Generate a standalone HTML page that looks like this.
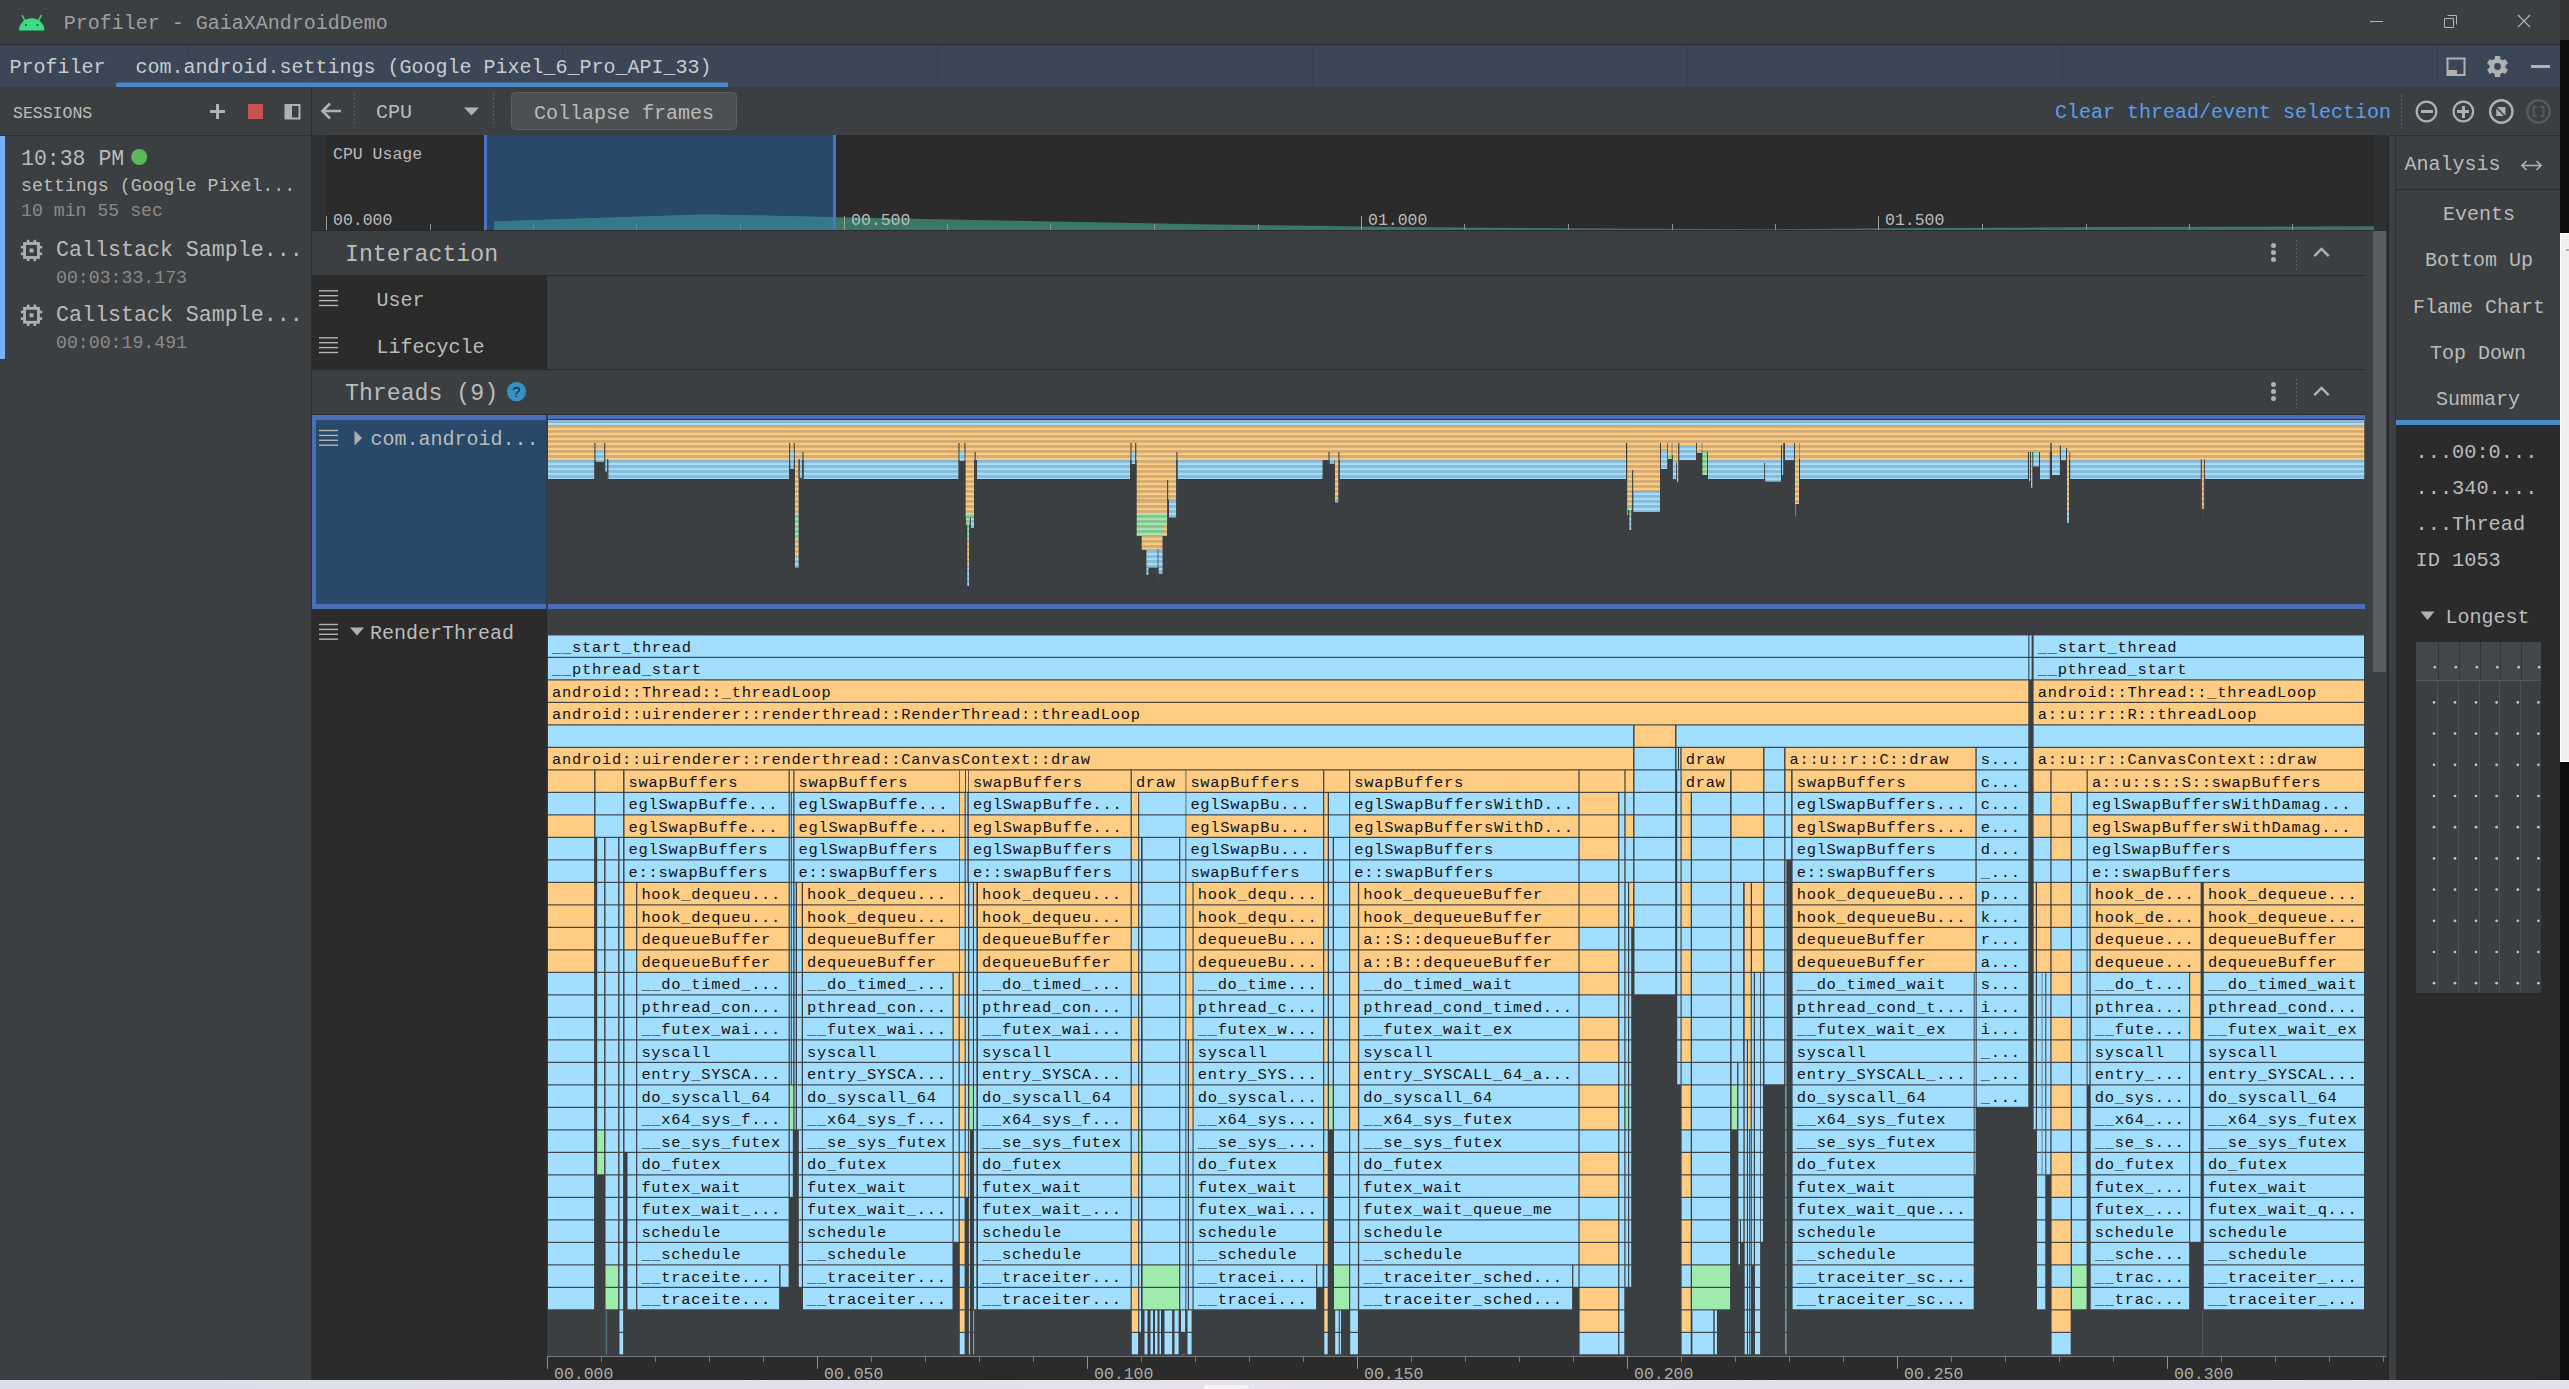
<!DOCTYPE html>
<html><head><meta charset="utf-8"><title>Profiler - GaiaXAndroidDemo</title>
<style>
html,body{margin:0;padding:0;background:#3c3f41;overflow:hidden}
svg{display:block}
text{font-family:"Liberation Mono",monospace;white-space:pre}
</style></head>
<body>
<svg width="2569" height="1389" viewBox="0 0 2569 1389">
<rect x="0" y="0" width="2560" height="1380" fill="#3c3f41" shape-rendering="crispEdges"/>
<rect x="2560" y="0" width="9" height="40" fill="#323232" shape-rendering="crispEdges"/>
<rect x="2560" y="40" width="9" height="193" fill="#0c0c0c" shape-rendering="crispEdges"/>
<rect x="2560" y="233" width="9" height="529" fill="#f0f0f0" shape-rendering="crispEdges"/>
<rect x="2560" y="233" width="1" height="529" fill="#ffffff" shape-rendering="crispEdges"/>
<rect x="2560" y="233" width="9" height="1" fill="#ffffff" shape-rendering="crispEdges"/>
<rect x="2560" y="761" width="9" height="1" fill="#ffffff" shape-rendering="crispEdges"/>
<rect x="2560" y="762" width="9" height="618" fill="#0c0c0c" shape-rendering="crispEdges"/>
<rect x="2566" y="249" width="3" height="2" fill="#a9b6c4" shape-rendering="crispEdges"/>
<defs><linearGradient id="bot" x1="0" x2="1" y1="0" y2="0"><stop offset="0" stop-color="#d9deea"/><stop offset="0.3" stop-color="#e2e0ea"/><stop offset="0.5" stop-color="#e7e2ec"/><stop offset="0.8" stop-color="#dfe0ea"/><stop offset="1" stop-color="#e2e2ec"/></linearGradient></defs>
<rect x="0" y="1380" width="2569" height="9" fill="url(#bot)"/>
<rect x="1203" y="1385" width="46" height="8" rx="4" fill="#f6f4f8"/>
<rect x="0" y="44" width="2560" height="1" fill="#2c2e2f" shape-rendering="crispEdges"/>
<g transform="translate(19,14.5)"><path d="M0 16 A12.7 12.2 0 0 1 25.4 16 Z" fill="#3ddc84"/><line x1="5.6" y1="5.6" x2="3.3" y2="1.2" stroke="#3ddc84" stroke-width="1.5" stroke-linecap="round"/><line x1="19.8" y1="5.6" x2="22.1" y2="1.2" stroke="#3ddc84" stroke-width="1.5" stroke-linecap="round"/><circle cx="7" cy="10.5" r="1.1" fill="#3c3f41"/><circle cx="18.4" cy="10.5" r="1.1" fill="#3c3f41"/></g>
<text x="63.8" y="29" font-size="20" fill="#9d9fa1">Profiler - GaiaXAndroidDemo</text>
<line x1="2370" y1="21.5" x2="2383" y2="21.5" stroke="#b4b4b4" stroke-width="1"/>
<path d="M2447.5 15.5h9v9 M2444.5 18.5h9v9h-9z" fill="none" stroke="#b4b4b4" stroke-width="1"/>
<path d="M2518 15 l12 12 M2530 15 l-12 12" fill="none" stroke="#b4b4b4" stroke-width="1.1"/>
<rect x="0" y="45" width="2560" height="42" fill="#3b4757" shape-rendering="crispEdges"/>
<rect x="187" y="45" width="1" height="41" fill="#364150" shape-rendering="crispEdges"/>
<rect x="562" y="45" width="1" height="41" fill="#364150" shape-rendering="crispEdges"/>
<rect x="937" y="45" width="1" height="41" fill="#364150" shape-rendering="crispEdges"/>
<rect x="1312" y="45" width="1" height="41" fill="#364150" shape-rendering="crispEdges"/>
<rect x="1687" y="45" width="1" height="41" fill="#364150" shape-rendering="crispEdges"/>
<rect x="2062" y="45" width="1" height="41" fill="#364150" shape-rendering="crispEdges"/>
<rect x="2437" y="45" width="1" height="41" fill="#364150" shape-rendering="crispEdges"/>
<text x="9.5" y="72.5" font-size="20" fill="#c8cbce">Profiler</text>
<text x="135.5" y="72.5" font-size="20" fill="#c8cbce">com.android.settings (Google Pixel_6_Pro_API_33)</text>
<path d="M118 82.5 H728 V87 H116 V84.5 A2 2 0 0 1 118 82.5Z" fill="#4a88c7"/>
<rect x="2447.5" y="58.5" width="17" height="16.5" fill="none" stroke="#afb1b3" stroke-width="2"/>
<rect x="2447" y="70" width="10" height="6" fill="#afb1b3" shape-rendering="crispEdges"/>
<path d="M2495.25 59.24 L2495.47 56.50 L2499.53 56.50 L2499.75 59.24 L2502.66 60.92 L2505.14 59.75 L2507.17 63.26 L2504.91 64.81 L2504.91 68.19 L2507.17 69.74 L2505.14 73.25 L2502.66 72.08 L2499.75 73.76 L2499.53 76.50 L2495.47 76.50 L2495.25 73.76 L2492.34 72.08 L2489.86 73.25 L2487.83 69.74 L2490.09 68.19 L2490.09 64.81 L2487.83 63.26 L2489.86 59.75 L2492.34 60.92Z" fill="#afb1b3" stroke="#afb1b3" stroke-width="1.2" stroke-linejoin="round"/>
<circle cx="2497.5" cy="66.5" r="3.4" fill="#3b4757"/>
<rect x="2531" y="65" width="19" height="3" fill="#afb1b3" shape-rendering="crispEdges"/>
<rect x="0" y="135" width="312" height="1" fill="#2c2e2f" shape-rendering="crispEdges"/>
<rect x="2389" y="135" width="171" height="1" fill="#2c2e2f" shape-rendering="crispEdges"/>
<text x="13" y="118" font-size="16.5" fill="#bbbbbb">SESSIONS</text>
<rect x="210" y="110.2" width="15" height="2.6" fill="#afb1b3" shape-rendering="crispEdges"/>
<rect x="216.2" y="104" width="2.6" height="15" fill="#afb1b3" shape-rendering="crispEdges"/>
<rect x="248" y="104" width="15" height="15" fill="#c75450" shape-rendering="crispEdges"/>
<rect x="285.5" y="105" width="14" height="13.5" fill="none" stroke="#afb1b3" stroke-width="2"/>
<rect x="285" y="104.5" width="7" height="14.5" fill="#afb1b3" shape-rendering="crispEdges"/>
<rect x="311" y="87" width="1" height="1293" fill="#2c2e2f" shape-rendering="crispEdges"/>
<path d="M341 111 H323 M330 103.5 L322.5 111 L330 118.5" fill="none" stroke="#afb1b3" stroke-width="2.6"/>
<line x1="354.5" y1="94" x2="354.5" y2="125" stroke="#6a6d6f" stroke-width="1" stroke-dasharray="1.5 2.5"/>
<line x1="493.5" y1="94" x2="493.5" y2="125" stroke="#6a6d6f" stroke-width="1" stroke-dasharray="1.5 2.5"/>
<line x1="2401.5" y1="95" x2="2401.5" y2="130" stroke="#6a6d6f" stroke-width="1" stroke-dasharray="1.5 2.5"/>
<text x="376" y="118" font-size="20" fill="#bbbbbb">CPU</text>
<path d="M464 107.5 h15 l-7.5 8 z" fill="#afb1b3"/>
<rect x="511.5" y="92.5" width="225" height="37" rx="4" fill="#4c5052" stroke="#5e6162" stroke-width="1"/>
<text x="534" y="118.5" font-size="20" fill="#bbbbbb">Collapse frames</text>
<text x="2055" y="117.5" font-size="20" fill="#589df6">Clear thread/event selection</text>
<circle cx="2426.5" cy="111.5" r="9.8" fill="none" stroke="#afb1b3" stroke-width="2.2"/>
<rect x="2420.5" y="110.2" width="12" height="2.6" fill="#afb1b3" shape-rendering="crispEdges"/>
<circle cx="2463.3" cy="111.5" r="9.8" fill="none" stroke="#afb1b3" stroke-width="2.2"/>
<rect x="2457.3" y="110.2" width="12" height="2.6" fill="#afb1b3" shape-rendering="crispEdges"/>
<rect x="2462" y="105.5" width="2.6" height="12" fill="#afb1b3" shape-rendering="crispEdges"/>
<circle cx="2501.3" cy="111.5" r="11.2" fill="none" stroke="#afb1b3" stroke-width="2.4"/>
<path d="M2497 107 h8.5 v8.5 z M2496.3 108.5 v7.5 h7.5 z" fill="#afb1b3"/>
<circle cx="2538.5" cy="111.5" r="11.2" fill="none" stroke="#585b5d" stroke-width="2.4"/>
<path d="M2536.5 106.8 h-3 v9.4 h3 M2540.5 106.8 h3 v9.4 h-3" fill="none" stroke="#585b5d" stroke-width="1.8"/>
<rect x="0" y="136" width="5" height="223" fill="#7aaeff" shape-rendering="crispEdges"/>
<text x="21" y="165" font-size="21.5" fill="#bbbbbb">10:38 PM</text>
<circle cx="139.2" cy="157" r="8" fill="#5cb85c"/>
<text x="21" y="190.5" font-size="18.3" fill="#bbbbbb">settings (Google Pixel...</text>
<text x="21" y="215.5" font-size="18.2" fill="#8a8a8a">10 min 55 sec</text>
<g transform="translate(31.5,250.5) scale(0.93)">
<rect x="-7.5" y="-7.5" width="15" height="15" fill="none" stroke="#afb1b3" stroke-width="3"/>
<rect x="-2.1" y="-2.1" width="4.2" height="4.2" fill="#afb1b3"/>
<rect x="-5.0" y="-11.5" width="2.8" height="3" fill="#afb1b3"/>
<rect x="-5.0" y="8.5" width="2.8" height="3" fill="#afb1b3"/>
<rect x="-11.5" y="-5.0" width="3" height="2.8" fill="#afb1b3"/>
<rect x="8.5" y="-5.0" width="3" height="2.8" fill="#afb1b3"/>
<rect x="2.2" y="-11.5" width="2.8" height="3" fill="#afb1b3"/>
<rect x="2.2" y="8.5" width="2.8" height="3" fill="#afb1b3"/>
<rect x="-11.5" y="2.2" width="3" height="2.8" fill="#afb1b3"/>
<rect x="8.5" y="2.2" width="3" height="2.8" fill="#afb1b3"/>
</g>
<text x="56" y="255.5" font-size="21.65" fill="#bbbbbb">Callstack Sample...</text>
<text x="56" y="282.5" font-size="18.2" fill="#8a8a8a">00:03:33.173</text>
<g transform="translate(31.5,315.3) scale(0.93)">
<rect x="-7.5" y="-7.5" width="15" height="15" fill="none" stroke="#afb1b3" stroke-width="3"/>
<rect x="-2.1" y="-2.1" width="4.2" height="4.2" fill="#afb1b3"/>
<rect x="-5.0" y="-11.5" width="2.8" height="3" fill="#afb1b3"/>
<rect x="-5.0" y="8.5" width="2.8" height="3" fill="#afb1b3"/>
<rect x="-11.5" y="-5.0" width="3" height="2.8" fill="#afb1b3"/>
<rect x="8.5" y="-5.0" width="3" height="2.8" fill="#afb1b3"/>
<rect x="2.2" y="-11.5" width="2.8" height="3" fill="#afb1b3"/>
<rect x="2.2" y="8.5" width="2.8" height="3" fill="#afb1b3"/>
<rect x="-11.5" y="2.2" width="3" height="2.8" fill="#afb1b3"/>
<rect x="8.5" y="2.2" width="3" height="2.8" fill="#afb1b3"/>
</g>
<text x="56" y="320.5" font-size="21.65" fill="#bbbbbb">Callstack Sample...</text>
<text x="56" y="347.5" font-size="18.2" fill="#8a8a8a">00:00:19.491</text>
<rect x="312" y="135" width="2062" height="96" fill="#2b2b2b" shape-rendering="crispEdges"/>
<rect x="312" y="135" width="14" height="96" fill="#2e3031" shape-rendering="crispEdges"/>
<rect x="2374" y="135" width="13" height="96" fill="#2e2f31" shape-rendering="crispEdges"/>
<rect x="2387" y="136" width="2" height="1244" fill="#272829" shape-rendering="crispEdges"/>
<rect x="2389" y="136" width="6" height="1244" fill="#3d4043" shape-rendering="crispEdges"/>
<rect x="2395" y="136" width="1" height="284" fill="#303233" shape-rendering="crispEdges"/>
<rect x="484" y="135" width="352" height="96" fill="#28496a" shape-rendering="crispEdges"/>
<clipPath id="cs"><rect x="484" y="135" width="352" height="96"/></clipPath>
<path d="M494 230 L494 221.5 L703 214.5 L760 215.5 L836 217.3 L1000 220.5 L1200 224.2 L1400 227 L1600 228.6 L1760 229.3 L1900 228.2 L2100 227 L2374 226.2 L2374 230Z" fill="#3a7767"/>
<path d="M494 230 L494 221.5 L703 214.5 L760 215.5 L836 217.3 L1000 220.5 L1200 224.2 L1400 227 L1600 228.6 L1760 229.3 L1900 228.2 L2100 227 L2374 226.2 L2374 230Z" fill="#347989" clip-path="url(#cs)"/>
<rect x="484" y="135" width="3" height="96" fill="#4f73c4" shape-rendering="crispEdges"/>
<rect x="833" y="135" width="3" height="96" fill="#4f73c4" shape-rendering="crispEdges"/>
<text x="333" y="159" font-size="16.5" fill="#bbbbbb">CPU Usage</text>
<rect x="326" y="216" width="1" height="14" fill="#9a9c9d" shape-rendering="crispEdges"/>
<text x="333" y="224.5" font-size="16.5" fill="#bbbbbb">00.000</text>
<rect x="430" y="224" width="1" height="6" fill="#8f9192" shape-rendering="crispEdges"/>
<rect x="533" y="224" width="1" height="6" fill="#5d8aa0" shape-rendering="crispEdges"/>
<rect x="636" y="224" width="1" height="6" fill="#5d8aa0" shape-rendering="crispEdges"/>
<rect x="740" y="224" width="1" height="6" fill="#5d8aa0" shape-rendering="crispEdges"/>
<rect x="844" y="216" width="1" height="14" fill="#9a9c9d" shape-rendering="crispEdges"/>
<text x="851" y="224.5" font-size="16.5" fill="#bbbbbb">00.500</text>
<rect x="947" y="224" width="1" height="6" fill="#8f9192" shape-rendering="crispEdges"/>
<rect x="1050" y="224" width="1" height="6" fill="#8f9192" shape-rendering="crispEdges"/>
<rect x="1154" y="224" width="1" height="6" fill="#8f9192" shape-rendering="crispEdges"/>
<rect x="1258" y="224" width="1" height="6" fill="#8f9192" shape-rendering="crispEdges"/>
<rect x="1361" y="216" width="1" height="14" fill="#9a9c9d" shape-rendering="crispEdges"/>
<text x="1368" y="224.5" font-size="16.5" fill="#bbbbbb">01.000</text>
<rect x="1464" y="224" width="1" height="6" fill="#8f9192" shape-rendering="crispEdges"/>
<rect x="1568" y="224" width="1" height="6" fill="#8f9192" shape-rendering="crispEdges"/>
<rect x="1672" y="224" width="1" height="6" fill="#8f9192" shape-rendering="crispEdges"/>
<rect x="1775" y="224" width="1" height="6" fill="#8f9192" shape-rendering="crispEdges"/>
<rect x="1878" y="216" width="1" height="14" fill="#9a9c9d" shape-rendering="crispEdges"/>
<text x="1885" y="224.5" font-size="16.5" fill="#bbbbbb">01.500</text>
<rect x="1982" y="224" width="1" height="6" fill="#8f9192" shape-rendering="crispEdges"/>
<rect x="2086" y="224" width="1" height="6" fill="#8f9192" shape-rendering="crispEdges"/>
<rect x="2189" y="224" width="1" height="6" fill="#8f9192" shape-rendering="crispEdges"/>
<rect x="2292" y="224" width="1" height="6" fill="#8f9192" shape-rendering="crispEdges"/>
<rect x="312" y="230" width="2053" height="1" fill="#27292a" shape-rendering="crispEdges"/>
<rect x="312" y="275" width="2053" height="1" fill="#2a2c2d" shape-rendering="crispEdges"/>
<text x="345" y="261" font-size="23.2" fill="#bbbbbb">Interaction</text>
<circle cx="2273.5" cy="245.5" r="2.5" fill="#afb1b3"/>
<circle cx="2273.5" cy="252.5" r="2.5" fill="#afb1b3"/>
<circle cx="2273.5" cy="259.5" r="2.5" fill="#afb1b3"/>
<path d="M2314.3 256.2 L2321.5 249 L2328.7 256.2" fill="none" stroke="#afb1b3" stroke-width="2.4"/>
<line x1="2296.5" y1="240" x2="2296.5" y2="272" stroke="#6a6d6f" stroke-width="1" stroke-dasharray="1.5 2.5"/>
<rect x="312" y="276" width="234.5" height="93.5" fill="#2b2b2b" shape-rendering="crispEdges"/>
<rect x="319" y="290.1" width="19" height="1.4" fill="#b4b4b4"/>
<rect x="319" y="295" width="19" height="1.4" fill="#b4b4b4"/>
<rect x="319" y="299.9" width="19" height="1.4" fill="#b4b4b4"/>
<rect x="319" y="304.8" width="19" height="1.4" fill="#b4b4b4"/>
<text x="376.5" y="306" font-size="20" fill="#bbbbbb">User</text>
<rect x="319" y="337.1" width="19" height="1.4" fill="#b4b4b4"/>
<rect x="319" y="342" width="19" height="1.4" fill="#b4b4b4"/>
<rect x="319" y="346.9" width="19" height="1.4" fill="#b4b4b4"/>
<rect x="319" y="351.8" width="19" height="1.4" fill="#b4b4b4"/>
<text x="376.5" y="353" font-size="20" fill="#bbbbbb">Lifecycle</text>
<rect x="312" y="369" width="2053" height="1" fill="#2a2c2d" shape-rendering="crispEdges"/>
<text x="345" y="399.7" font-size="23.2" fill="#bbbbbb">Threads (9)</text>
<circle cx="516.5" cy="391.6" r="9.6" fill="#3592c4"/>
<text x="516.5" y="397.2" font-size="15" fill="#1f2a30" text-anchor="middle" style="font-family:'Liberation Sans',sans-serif">?</text>
<circle cx="2273.5" cy="384.5" r="2.5" fill="#afb1b3"/>
<circle cx="2273.5" cy="391.5" r="2.5" fill="#afb1b3"/>
<circle cx="2273.5" cy="398.5" r="2.5" fill="#afb1b3"/>
<path d="M2314.3 395.2 L2321.5 388 L2328.7 395.2" fill="none" stroke="#afb1b3" stroke-width="2.4"/>
<line x1="2296.5" y1="379" x2="2296.5" y2="411" stroke="#6a6d6f" stroke-width="1" stroke-dasharray="1.5 2.5"/>
<rect x="312" y="414" width="2053" height="1" fill="#2a2c2d" shape-rendering="crispEdges"/>
<rect x="312" y="415" width="2053" height="193.5" fill="#4b6eb7" shape-rendering="crispEdges"/>
<rect x="316" y="419.5" width="230" height="184.5" fill="#28496a" shape-rendering="crispEdges"/>
<rect x="546" y="415" width="1.5" height="193.5" fill="#2f3d52" shape-rendering="crispEdges"/>
<rect x="547.5" y="419.5" width="1817.5" height="184.5" fill="#3c3f41" shape-rendering="crispEdges"/>
<rect x="319" y="429.8" width="19" height="1.4" fill="#b4b4b4"/>
<rect x="319" y="434.7" width="19" height="1.4" fill="#b4b4b4"/>
<rect x="319" y="439.6" width="19" height="1.4" fill="#b4b4b4"/>
<rect x="319" y="444.5" width="19" height="1.4" fill="#b4b4b4"/>
<path d="M354.5 430.5 v15 l7.5 -7.5z" fill="#afb1b3"/>
<text x="370.5" y="445" font-size="20" fill="#bbbbbb">com.android...</text>
<rect x="312" y="608.5" width="234.5" height="771.5" fill="#2b2b2b" shape-rendering="crispEdges"/>
<rect x="319" y="623.8" width="19" height="1.4" fill="#b4b4b4"/>
<rect x="319" y="628.7" width="19" height="1.4" fill="#b4b4b4"/>
<rect x="319" y="633.6" width="19" height="1.4" fill="#b4b4b4"/>
<rect x="319" y="638.5" width="19" height="1.4" fill="#b4b4b4"/>
<path d="M350 627.5 h14 l-7 8z" fill="#afb1b3"/>
<text x="370" y="638.5" font-size="20" fill="#bbbbbb">RenderThread</text>
<rect x="2373" y="231" width="13" height="441" fill="#5b5d5f" shape-rendering="crispEdges"/>
<rect x="546.5" y="1356.5" width="1840.5" height="23.5" fill="#2b2b2b" shape-rendering="crispEdges"/>
<rect x="547" y="1356" width="1839" height="1" fill="#77797a" shape-rendering="crispEdges"/>
<rect x="547" y="1356" width="1" height="13" fill="#8d8f90" shape-rendering="crispEdges"/>
<text x="554" y="1378.5" font-size="16.5" fill="#a9abad">00.000</text>
<rect x="601" y="1356" width="1" height="6" fill="#77797a" shape-rendering="crispEdges"/>
<rect x="655" y="1356" width="1" height="6" fill="#77797a" shape-rendering="crispEdges"/>
<rect x="709" y="1356" width="1" height="6" fill="#77797a" shape-rendering="crispEdges"/>
<rect x="763" y="1356" width="1" height="6" fill="#77797a" shape-rendering="crispEdges"/>
<rect x="817" y="1356" width="1" height="13" fill="#8d8f90" shape-rendering="crispEdges"/>
<text x="824" y="1378.5" font-size="16.5" fill="#a9abad">00.050</text>
<rect x="871" y="1356" width="1" height="6" fill="#77797a" shape-rendering="crispEdges"/>
<rect x="925" y="1356" width="1" height="6" fill="#77797a" shape-rendering="crispEdges"/>
<rect x="979" y="1356" width="1" height="6" fill="#77797a" shape-rendering="crispEdges"/>
<rect x="1033" y="1356" width="1" height="6" fill="#77797a" shape-rendering="crispEdges"/>
<rect x="1087" y="1356" width="1" height="13" fill="#8d8f90" shape-rendering="crispEdges"/>
<text x="1094" y="1378.5" font-size="16.5" fill="#a9abad">00.100</text>
<rect x="1141" y="1356" width="1" height="6" fill="#77797a" shape-rendering="crispEdges"/>
<rect x="1195" y="1356" width="1" height="6" fill="#77797a" shape-rendering="crispEdges"/>
<rect x="1249" y="1356" width="1" height="6" fill="#77797a" shape-rendering="crispEdges"/>
<rect x="1303" y="1356" width="1" height="6" fill="#77797a" shape-rendering="crispEdges"/>
<rect x="1357" y="1356" width="1" height="13" fill="#8d8f90" shape-rendering="crispEdges"/>
<text x="1364" y="1378.5" font-size="16.5" fill="#a9abad">00.150</text>
<rect x="1411" y="1356" width="1" height="6" fill="#77797a" shape-rendering="crispEdges"/>
<rect x="1465" y="1356" width="1" height="6" fill="#77797a" shape-rendering="crispEdges"/>
<rect x="1519" y="1356" width="1" height="6" fill="#77797a" shape-rendering="crispEdges"/>
<rect x="1573" y="1356" width="1" height="6" fill="#77797a" shape-rendering="crispEdges"/>
<rect x="1627" y="1356" width="1" height="13" fill="#8d8f90" shape-rendering="crispEdges"/>
<text x="1634" y="1378.5" font-size="16.5" fill="#a9abad">00.200</text>
<rect x="1681" y="1356" width="1" height="6" fill="#77797a" shape-rendering="crispEdges"/>
<rect x="1735" y="1356" width="1" height="6" fill="#77797a" shape-rendering="crispEdges"/>
<rect x="1789" y="1356" width="1" height="6" fill="#77797a" shape-rendering="crispEdges"/>
<rect x="1843" y="1356" width="1" height="6" fill="#77797a" shape-rendering="crispEdges"/>
<rect x="1897" y="1356" width="1" height="13" fill="#8d8f90" shape-rendering="crispEdges"/>
<text x="1904" y="1378.5" font-size="16.5" fill="#a9abad">00.250</text>
<rect x="1951" y="1356" width="1" height="6" fill="#77797a" shape-rendering="crispEdges"/>
<rect x="2005" y="1356" width="1" height="6" fill="#77797a" shape-rendering="crispEdges"/>
<rect x="2059" y="1356" width="1" height="6" fill="#77797a" shape-rendering="crispEdges"/>
<rect x="2113" y="1356" width="1" height="6" fill="#77797a" shape-rendering="crispEdges"/>
<rect x="2167" y="1356" width="1" height="13" fill="#8d8f90" shape-rendering="crispEdges"/>
<text x="2174" y="1378.5" font-size="16.5" fill="#a9abad">00.300</text>
<rect x="2221" y="1356" width="1" height="6" fill="#77797a" shape-rendering="crispEdges"/>
<rect x="2275" y="1356" width="1" height="6" fill="#77797a" shape-rendering="crispEdges"/>
<rect x="2329" y="1356" width="1" height="6" fill="#77797a" shape-rendering="crispEdges"/>
<rect x="2383" y="1356" width="1" height="6" fill="#77797a" shape-rendering="crispEdges"/>
<defs><pattern id="pO" patternUnits="userSpaceOnUse" x="0" y="425.1" width="8" height="5"><rect width="8" height="5" fill="#fecc82"/><rect y="0" width="8" height="2.75" fill="#cfaa72"/></pattern><pattern id="pB" patternUnits="userSpaceOnUse" x="0" y="425.1" width="8" height="5"><rect width="8" height="5" fill="#a2deff"/><rect y="0" width="8" height="2.75" fill="#8ab7d1"/></pattern><pattern id="pG" patternUnits="userSpaceOnUse" x="0" y="425.1" width="8" height="5"><rect width="8" height="5" fill="#9feaad"/><rect y="0" width="8" height="2.75" fill="#86c08f"/></pattern></defs>
<rect x="547.5" y="419.1" width="1816.8" height="0.9" fill="#30333c"/>
<rect x="548" y="420" width="1816.3" height="2.9" fill="#8cbad4"/>
<rect x="548" y="422.9" width="1816.3" height="1.2" fill="#fecc82"/>
<rect x="548" y="424" width="1816.3" height="1.1" fill="#a2deff"/>
<rect x="548" y="425.1" width="1816.3" height="35" fill="url(#pO)"/>
<rect x="548" y="460.1" width="1816.3" height="19" fill="url(#pB)"/>
<rect x="548" y="479.1" width="1816.3" height="0.9" fill="#34373a"/>
<rect x="594.2" y="460.1" width="14.1" height="20.1" fill="#3c3f41"/>
<rect x="595.6" y="450.1" width="8.6" height="11.8" fill="url(#pB)"/>
<rect x="594.3" y="443" width="1.2" height="19" fill="#474b4e"/>
<rect x="604.1" y="443" width="1.2" height="29" fill="#474b4e"/>
<rect x="605.4" y="460.1" width="1.6" height="11.7" fill="url(#pB)"/>
<rect x="607" y="459" width="1.2" height="21" fill="#474b4e"/>
<rect x="789" y="460" width="14.6" height="20.2" fill="#3c3f41"/>
<rect x="789" y="443" width="1.2" height="26" fill="#474b4e"/>
<rect x="793.7" y="443" width="1.2" height="26" fill="#474b4e"/>
<rect x="790.4" y="451" width="3.3" height="18" fill="url(#pB)"/>
<rect x="795" y="457.6" width="3.6" height="56.4" fill="url(#pO)"/>
<rect x="795" y="514" width="3.6" height="25" fill="url(#pG)"/>
<rect x="795" y="539" width="3.6" height="18" fill="url(#pO)"/>
<rect x="795" y="557" width="3.6" height="10.6" fill="url(#pB)"/>
<rect x="798.6" y="459" width="1.2" height="19" fill="#474b4e"/>
<rect x="799.9" y="457.6" width="2" height="20.4" fill="url(#pB)"/>
<rect x="802.4" y="452" width="1.2" height="26" fill="#474b4e"/>
<rect x="958.4" y="460" width="18.6" height="20.2" fill="#3c3f41"/>
<rect x="958.4" y="443" width="1.2" height="18" fill="#474b4e"/>
<rect x="964.3" y="443" width="1.2" height="18" fill="#474b4e"/>
<rect x="959.8" y="451" width="4.5" height="10" fill="url(#pB)"/>
<rect x="965.6" y="457.6" width="8.4" height="56.4" fill="url(#pO)"/>
<rect x="965.6" y="514" width="8.4" height="3.5" fill="url(#pG)"/>
<rect x="966" y="517.5" width="3.8" height="7.1" fill="url(#pG)"/>
<rect x="970.9" y="517.5" width="3.1" height="10.5" fill="url(#pB)"/>
<rect x="967.3" y="524.6" width="1.7" height="14.4" fill="url(#pG)"/>
<rect x="967.3" y="539" width="1.7" height="27" fill="url(#pO)"/>
<rect x="967.3" y="566" width="1.7" height="20" fill="url(#pB)"/>
<rect x="974.6" y="452" width="1.2" height="26" fill="#474b4e"/>
<rect x="1130" y="460" width="47.5" height="20.2" fill="#3c3f41"/>
<rect x="1130.4" y="443" width="1.2" height="21" fill="#474b4e"/>
<rect x="1135.1" y="443" width="1.2" height="21" fill="#474b4e"/>
<rect x="1131.8" y="451" width="3.2" height="13" fill="url(#pB)"/>
<rect x="1136.7" y="457.6" width="39.3" height="41.9" fill="url(#pO)"/>
<rect x="1169" y="499.5" width="7" height="18" fill="url(#pB)"/>
<rect x="1136.7" y="499.5" width="30.3" height="14.5" fill="url(#pO)"/>
<rect x="1136.7" y="514" width="30.3" height="22" fill="url(#pG)"/>
<rect x="1164" y="524.6" width="3" height="11.4" fill="url(#pO)"/>
<rect x="1167" y="480" width="1.2" height="44.6" fill="#474b4e"/>
<rect x="1141.7" y="536" width="20.8" height="13.7" fill="url(#pO)"/>
<rect x="1146.4" y="549.7" width="16.1" height="17.9" fill="url(#pB)"/>
<rect x="1158.6" y="567.6" width="3.9" height="6.1" fill="url(#pB)"/>
<rect x="1146.4" y="567.6" width="2" height="7.2" fill="url(#pB)"/>
<rect x="1157.6" y="549" width="0.8" height="34.7" fill="#474b4e"/>
<rect x="1176.3" y="452" width="1.2" height="65.5" fill="#474b4e"/>
<rect x="1136.7" y="457.2" width="39.3" height="1" fill="#a2deff"/>
<rect x="1322.6" y="460" width="17.2" height="20.2" fill="#3c3f41"/>
<rect x="1322.6" y="476.5" width="2" height="3" fill="#3c3f41"/>
<rect x="1328.4" y="452" width="1.2" height="12" fill="#474b4e"/>
<rect x="1338.2" y="452" width="1.2" height="51" fill="#474b4e"/>
<rect x="1329.8" y="457.6" width="4.6" height="6.1" fill="url(#pB)"/>
<rect x="1335" y="457.6" width="3.2" height="41.9" fill="url(#pO)"/>
<rect x="1335" y="499.5" width="3.2" height="3" fill="url(#pB)"/>
<rect x="1626" y="443" width="82" height="37.2" fill="#3c3f41"/>
<rect x="1627.2" y="443" width="32.8" height="48.1" fill="url(#pO)"/>
<rect x="1633.3" y="491.1" width="26.7" height="20.9" fill="url(#pB)"/>
<rect x="1627.2" y="491.1" width="4.7" height="13.9" fill="url(#pO)"/>
<rect x="1627.2" y="505" width="4.7" height="5" fill="url(#pG)"/>
<rect x="1627.2" y="510" width="0.8" height="5" fill="url(#pO)"/>
<rect x="1629.4" y="510" width="1.8" height="7" fill="url(#pG)"/>
<rect x="1629.4" y="517" width="1.8" height="13" fill="url(#pB)"/>
<rect x="1632" y="470" width="1.2" height="38" fill="#474b4e"/>
<rect x="1627.2" y="448.9" width="32.8" height="1" fill="#a2deff"/>
<rect x="1661" y="443" width="6.2" height="6.3" fill="url(#pO)"/>
<rect x="1661" y="449.3" width="6.2" height="19.7" fill="url(#pB)"/>
<rect x="1667.9" y="443" width="3.9" height="13" fill="url(#pO)"/>
<rect x="1667.9" y="456" width="3.9" height="3" fill="url(#pG)"/>
<rect x="1672.2" y="443" width="0.7" height="12" fill="url(#pO)"/>
<rect x="1672.9" y="443" width="3.1" height="17.1" fill="url(#pO)"/>
<rect x="1672.9" y="460.1" width="3.1" height="19" fill="url(#pB)"/>
<rect x="1676" y="443" width="0.9" height="20" fill="url(#pO)"/>
<rect x="1676.9" y="443" width="1.3" height="17.1" fill="url(#pO)"/>
<rect x="1676.9" y="460.1" width="1.3" height="21.9" fill="url(#pB)"/>
<rect x="1679.4" y="443" width="16.6" height="3" fill="url(#pO)"/>
<rect x="1679.4" y="446" width="16.6" height="14.1" fill="url(#pB)"/>
<rect x="1696.9" y="443" width="4.8" height="10" fill="url(#pO)"/>
<rect x="1701.7" y="443" width="0.7" height="9" fill="url(#pO)"/>
<rect x="1702.4" y="443" width="4.7" height="8.5" fill="url(#pO)"/>
<rect x="1702.4" y="451.5" width="4.7" height="23.5" fill="url(#pG)"/>
<rect x="1707.1" y="443" width="0.9" height="9" fill="url(#pO)"/>
<rect x="1764.1" y="463" width="1.2" height="18.7" fill="#474b4e"/>
<rect x="1765.4" y="460.1" width="15.5" height="21.6" fill="url(#pB)"/>
<rect x="1781" y="443" width="19" height="37.2" fill="#3c3f41"/>
<rect x="1781" y="443" width="2.2" height="2.3" fill="url(#pO)"/>
<rect x="1782" y="445.3" width="1.2" height="9.7" fill="url(#pO)"/>
<rect x="1782" y="455" width="1.2" height="20" fill="url(#pB)"/>
<rect x="1785" y="443" width="9" height="3" fill="url(#pO)"/>
<rect x="1785" y="446" width="9" height="14.1" fill="url(#pB)"/>
<rect x="1795" y="443" width="4" height="61" fill="url(#pO)"/>
<rect x="1795" y="475.2" width="4" height="0.9" fill="#9feaad"/>
<rect x="1795" y="480.2" width="4" height="0.9" fill="#9feaad"/>
<rect x="1795.2" y="504" width="0.9" height="12.5" fill="#6d8ea3"/>
<rect x="1799.4" y="443" width="0.6" height="16" fill="url(#pO)"/>
<rect x="2027.9" y="452" width="42.3" height="28.2" fill="#3c3f41"/>
<rect x="2029" y="452" width="1" height="17.5" fill="url(#pO)"/>
<rect x="2029" y="469.5" width="1" height="12" fill="url(#pB)"/>
<rect x="2031" y="452" width="1.3" height="20" fill="url(#pG)"/>
<rect x="2031" y="472" width="1.3" height="3" fill="url(#pO)"/>
<rect x="2031" y="475" width="1.3" height="13" fill="url(#pB)"/>
<rect x="2033.3" y="451.5" width="5.7" height="3.5" fill="url(#pG)"/>
<rect x="2033.3" y="455" width="5.7" height="11.5" fill="url(#pB)"/>
<rect x="2040" y="452" width="9.8" height="8.1" fill="url(#pO)"/>
<rect x="2040" y="460.1" width="9.8" height="19" fill="url(#pB)"/>
<rect x="2050.25" y="443" width="1.5" height="9" fill="#474b4e"/>
<rect x="2052" y="452" width="7.9" height="3" fill="url(#pO)"/>
<rect x="2052" y="455" width="7.9" height="20" fill="url(#pB)"/>
<rect x="2059.8" y="445.5" width="1.2" height="6.5" fill="#474b4e"/>
<rect x="2061" y="448.7" width="5" height="11.4" fill="url(#pB)"/>
<rect x="2066" y="448" width="1.2" height="4" fill="#474b4e"/>
<rect x="2067" y="452" width="2" height="58" fill="url(#pO)"/>
<rect x="2067" y="510" width="2" height="13" fill="url(#pB)"/>
<rect x="2069.6" y="452" width="0.6" height="7.5" fill="url(#pO)"/>
<rect x="2067" y="475.2" width="2" height="0.9" fill="#9feaad"/>
<rect x="2067" y="480.2" width="2" height="0.9" fill="#9feaad"/>
<rect x="2067" y="503" width="2" height="0.9" fill="#9feaad"/>
<rect x="2067" y="507" width="2" height="0.9" fill="#9feaad"/>
<rect x="2200.7" y="459.4" width="1.2" height="49.6" fill="#474b4e"/>
<rect x="2203.8" y="459.4" width="1.2" height="49.6" fill="#474b4e"/>
<rect x="2202" y="460" width="1.8" height="48.8" fill="url(#pO)"/>
<rect x="2202.5" y="508.8" width="0.8" height="12.8" fill="#474b4e"/>
<rect x="548" y="635.45" width="1480.3" height="21.35" fill="#a2deff"/>
<text x="552.1" y="651.55" font-size="15.4" fill="#121212" letter-spacing="0.74">__start_thread</text>
<rect x="548" y="657.95" width="1480.3" height="21.35" fill="#a2deff"/>
<text x="552.1" y="674.05" font-size="15.4" fill="#121212" letter-spacing="0.74">__pthread_start</text>
<rect x="548" y="680.45" width="1480.3" height="21.35" fill="#fecc82"/>
<text x="552.1" y="696.55" font-size="15.4" fill="#121212" letter-spacing="0.74">android::Thread::_threadLoop</text>
<rect x="548" y="702.95" width="1480.3" height="21.35" fill="#fecc82"/>
<text x="552.1" y="719.05" font-size="15.4" fill="#121212" letter-spacing="0.74">android::uirenderer::renderthread::RenderThread::threadLoop</text>
<rect x="548" y="725.45" width="1085.1" height="21.35" fill="#a2deff"/>
<rect x="1634.5" y="725.45" width="40.6" height="21.35" fill="#fecc82"/>
<rect x="1676.5" y="725.45" width="351.8" height="21.35" fill="#a2deff"/>
<rect x="548" y="747.95" width="1085.1" height="21.35" fill="#fecc82"/>
<text x="552.1" y="764.05" font-size="15.4" fill="#121212" letter-spacing="0.74">android::uirenderer::renderthread::CanvasContext::draw</text>
<rect x="1634.5" y="747.95" width="40.6" height="21.35" fill="#a2deff"/>
<rect x="1676.5" y="747.95" width="1.5" height="21.35" fill="#a2deff"/>
<rect x="1679" y="747.95" width="1.3" height="21.35" fill="#a2deff"/>
<rect x="1681.6" y="747.95" width="81.5" height="21.35" fill="#fecc82"/>
<text x="1685.7" y="764.05" font-size="15.4" fill="#121212" letter-spacing="0.74">draw</text>
<rect x="1764.5" y="747.95" width="19.6" height="21.35" fill="#a2deff"/>
<rect x="1785.5" y="747.95" width="189.9" height="21.35" fill="#fecc82"/>
<text x="1789.6" y="764.05" font-size="15.4" fill="#121212" letter-spacing="0.74">a::u::r::C::draw</text>
<rect x="1976.7" y="747.95" width="51.6" height="21.35" fill="#a2deff"/>
<text x="1980.8" y="764.05" font-size="15.4" fill="#121212" letter-spacing="0.74">s...</text>
<rect x="548" y="770.45" width="46.1" height="21.35" fill="#fecc82"/>
<rect x="548" y="792.95" width="46.1" height="21.35" fill="#a2deff"/>
<rect x="548" y="815.45" width="46.1" height="21.35" fill="#fecc82"/>
<rect x="548" y="837.95" width="46.1" height="21.35" fill="#a2deff"/>
<rect x="548" y="860.45" width="46.1" height="21.35" fill="#a2deff"/>
<rect x="548" y="882.95" width="46.1" height="21.35" fill="#fecc82"/>
<rect x="548" y="905.45" width="46.1" height="21.35" fill="#fecc82"/>
<rect x="548" y="927.95" width="46.1" height="21.35" fill="#fecc82"/>
<rect x="548" y="950.45" width="46.1" height="21.35" fill="#fecc82"/>
<rect x="548" y="972.95" width="46.1" height="21.35" fill="#a2deff"/>
<rect x="548" y="995.45" width="46.1" height="21.35" fill="#a2deff"/>
<rect x="548" y="1017.95" width="46.1" height="21.35" fill="#a2deff"/>
<rect x="548" y="1040.45" width="46.1" height="21.35" fill="#a2deff"/>
<rect x="548" y="1062.95" width="46.1" height="21.35" fill="#a2deff"/>
<rect x="548" y="1085.45" width="46.1" height="21.35" fill="#a2deff"/>
<rect x="548" y="1107.95" width="46.1" height="21.35" fill="#a2deff"/>
<rect x="548" y="1130.45" width="46.1" height="21.35" fill="#a2deff"/>
<rect x="548" y="1152.95" width="46.1" height="21.35" fill="#a2deff"/>
<rect x="548" y="1175.45" width="46.1" height="21.35" fill="#a2deff"/>
<rect x="548" y="1197.95" width="46.1" height="21.35" fill="#a2deff"/>
<rect x="548" y="1220.45" width="46.1" height="21.35" fill="#a2deff"/>
<rect x="548" y="1242.95" width="46.1" height="21.35" fill="#a2deff"/>
<rect x="548" y="1265.45" width="46.1" height="21.35" fill="#a2deff"/>
<rect x="548" y="1287.95" width="46.1" height="21.35" fill="#a2deff"/>
<rect x="595.5" y="770.45" width="27.6" height="21.35" fill="#fecc82"/>
<rect x="595.5" y="792.95" width="27.6" height="21.35" fill="#a2deff"/>
<rect x="595.5" y="815.45" width="27.6" height="21.35" fill="#a2deff"/>
<rect x="597.2" y="837.95" width="6.9" height="21.35" fill="#a2deff"/>
<rect x="597.2" y="860.45" width="6.9" height="21.35" fill="#a2deff"/>
<rect x="597.2" y="882.95" width="6.9" height="21.35" fill="#a2deff"/>
<rect x="597.2" y="905.45" width="6.9" height="21.35" fill="#a2deff"/>
<rect x="597.2" y="927.95" width="6.9" height="21.35" fill="#a2deff"/>
<rect x="597.2" y="950.45" width="6.9" height="21.35" fill="#a2deff"/>
<rect x="597.2" y="972.95" width="6.9" height="21.35" fill="#a2deff"/>
<rect x="597.2" y="995.45" width="6.9" height="21.35" fill="#a2deff"/>
<rect x="597.2" y="1017.95" width="6.9" height="21.35" fill="#a2deff"/>
<rect x="597.2" y="1040.45" width="6.9" height="21.35" fill="#a2deff"/>
<rect x="597.2" y="1062.95" width="6.9" height="21.35" fill="#a2deff"/>
<rect x="597.2" y="1085.45" width="6.9" height="21.35" fill="#a2deff"/>
<rect x="597.2" y="1107.95" width="6.9" height="21.35" fill="#a2deff"/>
<rect x="597.2" y="1130.45" width="6.9" height="21.35" fill="#9feaad"/>
<rect x="597.2" y="1152.95" width="6.9" height="21.35" fill="#9feaad"/>
<rect x="605.5" y="837.95" width="12.6" height="21.35" fill="#a2deff"/>
<rect x="605.5" y="860.45" width="12.6" height="21.35" fill="#a2deff"/>
<rect x="605.5" y="882.95" width="12.6" height="21.35" fill="#a2deff"/>
<rect x="605.5" y="905.45" width="12.6" height="21.35" fill="#a2deff"/>
<rect x="605.5" y="927.95" width="12.6" height="21.35" fill="#a2deff"/>
<rect x="605.5" y="950.45" width="12.6" height="21.35" fill="#a2deff"/>
<rect x="605.5" y="972.95" width="12.6" height="21.35" fill="#a2deff"/>
<rect x="605.5" y="995.45" width="12.6" height="21.35" fill="#a2deff"/>
<rect x="605.5" y="1017.95" width="12.6" height="21.35" fill="#a2deff"/>
<rect x="605.5" y="1040.45" width="12.6" height="21.35" fill="#a2deff"/>
<rect x="605.5" y="1062.95" width="12.6" height="21.35" fill="#a2deff"/>
<rect x="605.5" y="1085.45" width="12.6" height="21.35" fill="#a2deff"/>
<rect x="605.5" y="1107.95" width="12.6" height="21.35" fill="#a2deff"/>
<rect x="605.5" y="1130.45" width="12.6" height="21.35" fill="#a2deff"/>
<rect x="605.5" y="1152.95" width="12.6" height="21.35" fill="#a2deff"/>
<rect x="605.5" y="1175.45" width="12.6" height="21.35" fill="#a2deff"/>
<rect x="605.5" y="1197.95" width="12.6" height="21.35" fill="#a2deff"/>
<rect x="605.5" y="1220.45" width="12.6" height="21.35" fill="#a2deff"/>
<rect x="605.5" y="1242.95" width="12.6" height="21.35" fill="#a2deff"/>
<rect x="605.5" y="1265.45" width="12.6" height="21.35" fill="#9feaad"/>
<rect x="605.5" y="1287.95" width="12.6" height="21.35" fill="#9feaad"/>
<rect x="619.5" y="837.95" width="3.6" height="21.35" fill="#a2deff"/>
<rect x="619.5" y="860.45" width="3.6" height="21.35" fill="#a2deff"/>
<rect x="619.5" y="882.95" width="3.6" height="21.35" fill="#a2deff"/>
<rect x="619.5" y="905.45" width="3.6" height="21.35" fill="#a2deff"/>
<rect x="619.5" y="927.95" width="3.6" height="21.35" fill="#a2deff"/>
<rect x="619.5" y="950.45" width="3.6" height="21.35" fill="#a2deff"/>
<rect x="619.5" y="972.95" width="3.6" height="21.35" fill="#a2deff"/>
<rect x="619.5" y="995.45" width="3.6" height="21.35" fill="#a2deff"/>
<rect x="619.5" y="1017.95" width="3.6" height="21.35" fill="#a2deff"/>
<rect x="619.5" y="1040.45" width="3.6" height="21.35" fill="#a2deff"/>
<rect x="619.5" y="1062.95" width="3.6" height="21.35" fill="#a2deff"/>
<rect x="619.5" y="1085.45" width="3.6" height="21.35" fill="#a2deff"/>
<rect x="619.5" y="1107.95" width="3.6" height="21.35" fill="#a2deff"/>
<rect x="619.5" y="1130.45" width="3.6" height="21.35" fill="#a2deff"/>
<rect x="619.5" y="1152.95" width="3.6" height="21.35" fill="#a2deff"/>
<rect x="619.5" y="1175.45" width="3.6" height="21.35" fill="#a2deff"/>
<rect x="619.5" y="1197.95" width="3.6" height="21.35" fill="#a2deff"/>
<rect x="619.5" y="1220.45" width="3.6" height="21.35" fill="#a2deff"/>
<rect x="619.5" y="1242.95" width="3.6" height="21.35" fill="#a2deff"/>
<rect x="619.5" y="1265.45" width="3.6" height="21.35" fill="#a2deff"/>
<rect x="619.5" y="1287.95" width="3.6" height="21.35" fill="#a2deff"/>
<rect x="619.5" y="1310.45" width="3.6" height="21.35" fill="#a2deff"/>
<rect x="619.5" y="1332.95" width="3.6" height="21.35" fill="#a2deff"/>
<rect x="605.8" y="1310.45" width="0.8" height="44" fill="#6c8fa5"/>
<rect x="624.5" y="770.45" width="164.1" height="21.35" fill="#fecc82"/>
<text x="628.6" y="786.55" font-size="15.4" fill="#121212" letter-spacing="0.74">swapBuffers</text>
<rect x="624.5" y="792.95" width="164.1" height="21.35" fill="#a2deff"/>
<text x="628.6" y="809.05" font-size="15.4" fill="#121212" letter-spacing="0.74">eglSwapBuffe...</text>
<rect x="624.5" y="815.45" width="164.1" height="21.35" fill="#fecc82"/>
<text x="628.6" y="831.55" font-size="15.4" fill="#121212" letter-spacing="0.74">eglSwapBuffe...</text>
<rect x="624.5" y="837.95" width="164.1" height="21.35" fill="#a2deff"/>
<text x="628.6" y="854.05" font-size="15.4" fill="#121212" letter-spacing="0.74">eglSwapBuffers</text>
<rect x="624.5" y="860.45" width="164.1" height="21.35" fill="#a2deff"/>
<text x="628.6" y="876.55" font-size="15.4" fill="#121212" letter-spacing="0.74">e::swapBuffers</text>
<rect x="624.5" y="882.95" width="11.6" height="21.35" fill="#fecc82"/>
<rect x="624.5" y="905.45" width="11.6" height="21.35" fill="#fecc82"/>
<rect x="624.5" y="927.95" width="11.6" height="21.35" fill="#fecc82"/>
<rect x="624.5" y="950.45" width="11.6" height="21.35" fill="#a2deff"/>
<rect x="624.5" y="972.95" width="11.6" height="21.35" fill="#a2deff"/>
<rect x="624.5" y="995.45" width="11.6" height="21.35" fill="#a2deff"/>
<rect x="624.5" y="1017.95" width="11.6" height="21.35" fill="#a2deff"/>
<rect x="624.5" y="1040.45" width="11.6" height="21.35" fill="#a2deff"/>
<rect x="624.5" y="1062.95" width="11.6" height="21.35" fill="#a2deff"/>
<rect x="624.5" y="1085.45" width="11.6" height="21.35" fill="#a2deff"/>
<rect x="624.5" y="1107.95" width="11.6" height="21.35" fill="#a2deff"/>
<rect x="624.5" y="1130.45" width="11.6" height="21.35" fill="#a2deff"/>
<rect x="627.5" y="1152.95" width="8.6" height="21.35" fill="#a2deff"/>
<rect x="627.5" y="1175.45" width="8.6" height="21.35" fill="#a2deff"/>
<rect x="627.5" y="1197.95" width="8.6" height="21.35" fill="#a2deff"/>
<rect x="627.5" y="1220.45" width="8.6" height="21.35" fill="#a2deff"/>
<rect x="627.5" y="1242.95" width="8.6" height="21.35" fill="#a2deff"/>
<rect x="627.5" y="1265.45" width="8.6" height="21.35" fill="#a2deff"/>
<rect x="627.5" y="1287.95" width="8.6" height="21.35" fill="#a2deff"/>
<rect x="637.3" y="882.95" width="151.3" height="21.35" fill="#fecc82"/>
<text x="641.4" y="899.05" font-size="15.4" fill="#121212" letter-spacing="0.74">hook_dequeu...</text>
<rect x="637.3" y="905.45" width="151.3" height="21.35" fill="#fecc82"/>
<text x="641.4" y="921.55" font-size="15.4" fill="#121212" letter-spacing="0.74">hook_dequeu...</text>
<rect x="637.3" y="927.95" width="151.3" height="21.35" fill="#fecc82"/>
<text x="641.4" y="944.05" font-size="15.4" fill="#121212" letter-spacing="0.74">dequeueBuffer</text>
<rect x="637.3" y="950.45" width="151.3" height="21.35" fill="#fecc82"/>
<text x="641.4" y="966.55" font-size="15.4" fill="#121212" letter-spacing="0.74">dequeueBuffer</text>
<rect x="637.3" y="972.95" width="151.3" height="21.35" fill="#a2deff"/>
<text x="641.4" y="989.05" font-size="15.4" fill="#121212" letter-spacing="0.74">__do_timed_...</text>
<rect x="637.3" y="995.45" width="151.3" height="21.35" fill="#a2deff"/>
<text x="641.4" y="1011.55" font-size="15.4" fill="#121212" letter-spacing="0.74">pthread_con...</text>
<rect x="637.3" y="1017.95" width="151.3" height="21.35" fill="#a2deff"/>
<text x="641.4" y="1034.05" font-size="15.4" fill="#121212" letter-spacing="0.74">__futex_wai...</text>
<rect x="637.3" y="1040.45" width="151.3" height="21.35" fill="#a2deff"/>
<text x="641.4" y="1056.55" font-size="15.4" fill="#121212" letter-spacing="0.74">syscall</text>
<rect x="637.3" y="1062.95" width="151.3" height="21.35" fill="#a2deff"/>
<text x="641.4" y="1079.05" font-size="15.4" fill="#121212" letter-spacing="0.74">entry_SYSCA...</text>
<rect x="637.3" y="1085.45" width="151.3" height="21.35" fill="#a2deff"/>
<text x="641.4" y="1101.55" font-size="15.4" fill="#121212" letter-spacing="0.74">do_syscall_64</text>
<rect x="637.3" y="1107.95" width="151.3" height="21.35" fill="#a2deff"/>
<text x="641.4" y="1124.05" font-size="15.4" fill="#121212" letter-spacing="0.74">__x64_sys_f...</text>
<rect x="637.3" y="1130.45" width="151.3" height="21.35" fill="#a2deff"/>
<text x="641.4" y="1146.55" font-size="15.4" fill="#121212" letter-spacing="0.74">__se_sys_futex</text>
<rect x="637.3" y="1152.95" width="151.3" height="21.35" fill="#a2deff"/>
<text x="641.4" y="1169.05" font-size="15.4" fill="#121212" letter-spacing="0.74">do_futex</text>
<rect x="637.3" y="1175.45" width="151.3" height="21.35" fill="#a2deff"/>
<text x="641.4" y="1191.55" font-size="15.4" fill="#121212" letter-spacing="0.74">futex_wait</text>
<rect x="637.3" y="1197.95" width="151.3" height="21.35" fill="#a2deff"/>
<text x="641.4" y="1214.05" font-size="15.4" fill="#121212" letter-spacing="0.74">futex_wait_...</text>
<rect x="637.3" y="1220.45" width="151.3" height="21.35" fill="#a2deff"/>
<text x="641.4" y="1236.55" font-size="15.4" fill="#121212" letter-spacing="0.74">schedule</text>
<rect x="637.3" y="1242.95" width="151.3" height="21.35" fill="#a2deff"/>
<text x="641.4" y="1259.05" font-size="15.4" fill="#121212" letter-spacing="0.74">__schedule</text>
<rect x="637.3" y="1265.45" width="141.8" height="21.35" fill="#a2deff"/>
<text x="641.4" y="1281.55" font-size="15.4" fill="#121212" letter-spacing="0.74">__traceite...</text>
<rect x="780.5" y="1265.45" width="8.1" height="21.35" fill="#a2deff"/>
<rect x="637.3" y="1287.95" width="141.8" height="21.35" fill="#a2deff"/>
<text x="641.4" y="1304.05" font-size="15.4" fill="#121212" letter-spacing="0.74">__traceite...</text>
<rect x="789.8" y="770.45" width="3.5" height="21.35" fill="#fecc82"/>
<rect x="789.8" y="792.95" width="1" height="21.35" fill="#a2deff"/>
<rect x="789.8" y="815.45" width="1" height="21.35" fill="#a2deff"/>
<rect x="789.8" y="837.95" width="1" height="21.35" fill="#a2deff"/>
<rect x="789.8" y="860.45" width="1" height="21.35" fill="#a2deff"/>
<rect x="789.8" y="882.95" width="1" height="21.35" fill="#a2deff"/>
<rect x="789.8" y="905.45" width="1" height="21.35" fill="#a2deff"/>
<rect x="789.8" y="927.95" width="1" height="21.35" fill="#a2deff"/>
<rect x="789.8" y="950.45" width="1" height="21.35" fill="#a2deff"/>
<rect x="789.8" y="972.95" width="1" height="21.35" fill="#a2deff"/>
<rect x="789.8" y="995.45" width="1" height="21.35" fill="#a2deff"/>
<rect x="789.8" y="1017.95" width="1" height="21.35" fill="#a2deff"/>
<rect x="789.8" y="1040.45" width="1" height="21.35" fill="#a2deff"/>
<rect x="789.8" y="1062.95" width="1" height="21.35" fill="#a2deff"/>
<rect x="791.8" y="792.95" width="1.4" height="21.35" fill="#a2deff"/>
<rect x="791.8" y="815.45" width="1.4" height="21.35" fill="#a2deff"/>
<rect x="791.8" y="837.95" width="1.4" height="21.35" fill="#a2deff"/>
<rect x="791.8" y="860.45" width="1.4" height="21.35" fill="#a2deff"/>
<rect x="791.8" y="882.95" width="1.4" height="21.35" fill="#a2deff"/>
<rect x="791.8" y="905.45" width="1.4" height="21.35" fill="#a2deff"/>
<rect x="791.8" y="927.95" width="1.4" height="21.35" fill="#a2deff"/>
<rect x="791.8" y="950.45" width="1.4" height="21.35" fill="#a2deff"/>
<rect x="791.8" y="972.95" width="1.4" height="21.35" fill="#a2deff"/>
<rect x="791.8" y="995.45" width="1.4" height="21.35" fill="#a2deff"/>
<rect x="791.8" y="1017.95" width="1.4" height="21.35" fill="#a2deff"/>
<rect x="791.8" y="1040.45" width="1.4" height="21.35" fill="#a2deff"/>
<rect x="791.8" y="1062.95" width="1.4" height="21.35" fill="#a2deff"/>
<rect x="789.8" y="1085.45" width="3.5" height="21.35" fill="#9feaad"/>
<rect x="789.8" y="1107.95" width="3.5" height="21.35" fill="#9feaad"/>
<rect x="789.8" y="1130.45" width="3" height="21.35" fill="#a2deff"/>
<rect x="789.8" y="1152.95" width="3" height="21.35" fill="#a2deff"/>
<rect x="789.8" y="1175.45" width="3" height="21.35" fill="#a2deff"/>
<rect x="794.5" y="770.45" width="164.6" height="21.35" fill="#fecc82"/>
<text x="798.6" y="786.55" font-size="15.4" fill="#121212" letter-spacing="0.74">swapBuffers</text>
<rect x="794.5" y="792.95" width="164.6" height="21.35" fill="#a2deff"/>
<text x="798.6" y="809.05" font-size="15.4" fill="#121212" letter-spacing="0.74">eglSwapBuffe...</text>
<rect x="794.5" y="815.45" width="164.6" height="21.35" fill="#fecc82"/>
<text x="798.6" y="831.55" font-size="15.4" fill="#121212" letter-spacing="0.74">eglSwapBuffe...</text>
<rect x="794.5" y="837.95" width="164.6" height="21.35" fill="#a2deff"/>
<text x="798.6" y="854.05" font-size="15.4" fill="#121212" letter-spacing="0.74">eglSwapBuffers</text>
<rect x="794.5" y="860.45" width="164.6" height="21.35" fill="#a2deff"/>
<text x="798.6" y="876.55" font-size="15.4" fill="#121212" letter-spacing="0.74">e::swapBuffers</text>
<rect x="794.5" y="882.95" width="1.2" height="21.35" fill="#a2deff"/>
<rect x="794.5" y="905.45" width="1.2" height="21.35" fill="#a2deff"/>
<rect x="794.5" y="927.95" width="1.2" height="21.35" fill="#a2deff"/>
<rect x="794.5" y="950.45" width="1.2" height="21.35" fill="#a2deff"/>
<rect x="794.5" y="972.95" width="1.2" height="21.35" fill="#a2deff"/>
<rect x="794.5" y="995.45" width="1.2" height="21.35" fill="#a2deff"/>
<rect x="794.5" y="1017.95" width="1.2" height="21.35" fill="#a2deff"/>
<rect x="794.5" y="1040.45" width="1.2" height="21.35" fill="#a2deff"/>
<rect x="794.5" y="1062.95" width="1.2" height="21.35" fill="#a2deff"/>
<rect x="794.5" y="1085.45" width="1.2" height="21.35" fill="#a2deff"/>
<rect x="794.5" y="1107.95" width="1.2" height="21.35" fill="#a2deff"/>
<rect x="797" y="882.95" width="4.7" height="21.35" fill="#fecc82"/>
<rect x="797" y="905.45" width="4.7" height="21.35" fill="#fecc82"/>
<rect x="797" y="927.95" width="4.7" height="21.35" fill="#a2deff"/>
<rect x="797" y="950.45" width="4.7" height="21.35" fill="#a2deff"/>
<rect x="797" y="972.95" width="4.7" height="21.35" fill="#a2deff"/>
<rect x="797" y="995.45" width="4.7" height="21.35" fill="#a2deff"/>
<rect x="797" y="1017.95" width="4.7" height="21.35" fill="#a2deff"/>
<rect x="797" y="1040.45" width="4.7" height="21.35" fill="#a2deff"/>
<rect x="797" y="1062.95" width="4.7" height="21.35" fill="#a2deff"/>
<rect x="797" y="1085.45" width="4.7" height="21.35" fill="#a2deff"/>
<rect x="797" y="1107.95" width="4.7" height="21.35" fill="#a2deff"/>
<rect x="798.8" y="1130.45" width="3" height="21.35" fill="#a2deff"/>
<rect x="798.8" y="1152.95" width="3" height="21.35" fill="#a2deff"/>
<rect x="798.8" y="1175.45" width="3" height="21.35" fill="#a2deff"/>
<rect x="798.8" y="1197.95" width="3" height="21.35" fill="#a2deff"/>
<rect x="798.8" y="1220.45" width="3" height="21.35" fill="#a2deff"/>
<rect x="798.8" y="1242.95" width="3" height="21.35" fill="#a2deff"/>
<rect x="798.8" y="1265.45" width="3" height="21.35" fill="#a2deff"/>
<rect x="803" y="882.95" width="156.1" height="21.35" fill="#fecc82"/>
<text x="807.1" y="899.05" font-size="15.4" fill="#121212" letter-spacing="0.74">hook_dequeu...</text>
<rect x="803" y="905.45" width="156.1" height="21.35" fill="#fecc82"/>
<text x="807.1" y="921.55" font-size="15.4" fill="#121212" letter-spacing="0.74">hook_dequeu...</text>
<rect x="803" y="927.95" width="156.1" height="21.35" fill="#fecc82"/>
<text x="807.1" y="944.05" font-size="15.4" fill="#121212" letter-spacing="0.74">dequeueBuffer</text>
<rect x="803" y="950.45" width="156.1" height="21.35" fill="#fecc82"/>
<text x="807.1" y="966.55" font-size="15.4" fill="#121212" letter-spacing="0.74">dequeueBuffer</text>
<rect x="803" y="972.95" width="149.5" height="21.35" fill="#a2deff"/>
<text x="807.1" y="989.05" font-size="15.4" fill="#121212" letter-spacing="0.74">__do_timed_...</text>
<rect x="803" y="995.45" width="149.5" height="21.35" fill="#a2deff"/>
<text x="807.1" y="1011.55" font-size="15.4" fill="#121212" letter-spacing="0.74">pthread_con...</text>
<rect x="803" y="1017.95" width="149.5" height="21.35" fill="#a2deff"/>
<text x="807.1" y="1034.05" font-size="15.4" fill="#121212" letter-spacing="0.74">__futex_wai...</text>
<rect x="803" y="1040.45" width="149.5" height="21.35" fill="#a2deff"/>
<text x="807.1" y="1056.55" font-size="15.4" fill="#121212" letter-spacing="0.74">syscall</text>
<rect x="803" y="1062.95" width="149.5" height="21.35" fill="#a2deff"/>
<text x="807.1" y="1079.05" font-size="15.4" fill="#121212" letter-spacing="0.74">entry_SYSCA...</text>
<rect x="803" y="1085.45" width="149.5" height="21.35" fill="#a2deff"/>
<text x="807.1" y="1101.55" font-size="15.4" fill="#121212" letter-spacing="0.74">do_syscall_64</text>
<rect x="803" y="1107.95" width="149.5" height="21.35" fill="#a2deff"/>
<text x="807.1" y="1124.05" font-size="15.4" fill="#121212" letter-spacing="0.74">__x64_sys_f...</text>
<rect x="803" y="1130.45" width="149.5" height="21.35" fill="#a2deff"/>
<text x="807.1" y="1146.55" font-size="15.4" fill="#121212" letter-spacing="0.74">__se_sys_futex</text>
<rect x="803" y="1152.95" width="149.5" height="21.35" fill="#a2deff"/>
<text x="807.1" y="1169.05" font-size="15.4" fill="#121212" letter-spacing="0.74">do_futex</text>
<rect x="803" y="1175.45" width="149.5" height="21.35" fill="#a2deff"/>
<text x="807.1" y="1191.55" font-size="15.4" fill="#121212" letter-spacing="0.74">futex_wait</text>
<rect x="803" y="1197.95" width="149.5" height="21.35" fill="#a2deff"/>
<text x="807.1" y="1214.05" font-size="15.4" fill="#121212" letter-spacing="0.74">futex_wait_...</text>
<rect x="803" y="1220.45" width="149.5" height="21.35" fill="#a2deff"/>
<text x="807.1" y="1236.55" font-size="15.4" fill="#121212" letter-spacing="0.74">schedule</text>
<rect x="803" y="1242.95" width="149.5" height="21.35" fill="#a2deff"/>
<text x="807.1" y="1259.05" font-size="15.4" fill="#121212" letter-spacing="0.74">__schedule</text>
<rect x="803" y="1265.45" width="149.5" height="21.35" fill="#a2deff"/>
<text x="807.1" y="1281.55" font-size="15.4" fill="#121212" letter-spacing="0.74">__traceiter...</text>
<rect x="803" y="1287.95" width="149.5" height="21.35" fill="#a2deff"/>
<text x="807.1" y="1304.05" font-size="15.4" fill="#121212" letter-spacing="0.74">__traceiter...</text>
<rect x="953.7" y="972.95" width="4.9" height="21.35" fill="#fecc82"/>
<rect x="953.7" y="995.45" width="4.9" height="21.35" fill="#fecc82"/>
<rect x="953.7" y="1017.95" width="4.9" height="21.35" fill="#fecc82"/>
<rect x="953.7" y="1040.45" width="4.9" height="21.35" fill="#a2deff"/>
<rect x="953.7" y="1062.95" width="4.9" height="21.35" fill="#a2deff"/>
<rect x="953.7" y="1085.45" width="4.9" height="21.35" fill="#a2deff"/>
<rect x="953.7" y="1107.95" width="4.9" height="21.35" fill="#a2deff"/>
<rect x="953.7" y="1130.45" width="4.9" height="21.35" fill="#a2deff"/>
<rect x="953.7" y="1152.95" width="4.9" height="21.35" fill="#a2deff"/>
<rect x="953.7" y="1175.45" width="4.9" height="21.35" fill="#a2deff"/>
<rect x="953.7" y="1197.95" width="4.9" height="21.35" fill="#a2deff"/>
<rect x="953.7" y="1220.45" width="4.9" height="21.35" fill="#a2deff"/>
<rect x="959.8" y="770.45" width="5.3" height="21.35" fill="#fecc82"/>
<rect x="966" y="770.45" width="2" height="21.35" fill="#fecc82"/>
<rect x="959.8" y="792.95" width="4.8" height="21.35" fill="#fecc82"/>
<rect x="959.8" y="815.45" width="4.8" height="21.35" fill="#fecc82"/>
<rect x="959.8" y="837.95" width="4.8" height="21.35" fill="#fecc82"/>
<rect x="959.8" y="860.45" width="4.8" height="21.35" fill="#a2deff"/>
<rect x="959.8" y="882.95" width="4.8" height="21.35" fill="#fecc82"/>
<rect x="959.8" y="905.45" width="4.8" height="21.35" fill="#fecc82"/>
<rect x="959.8" y="927.95" width="4.8" height="21.35" fill="#a2deff"/>
<rect x="959.8" y="950.45" width="4.8" height="21.35" fill="#fecc82"/>
<rect x="959.8" y="972.95" width="4.8" height="21.35" fill="#fecc82"/>
<rect x="959.8" y="995.45" width="4.8" height="21.35" fill="#a2deff"/>
<rect x="959.8" y="1017.95" width="4.8" height="21.35" fill="#fecc82"/>
<rect x="959.8" y="1040.45" width="4.8" height="21.35" fill="#fecc82"/>
<rect x="959.8" y="1062.95" width="4.8" height="21.35" fill="#a2deff"/>
<rect x="959.8" y="1085.45" width="4.8" height="21.35" fill="#fecc82"/>
<rect x="959.8" y="1107.95" width="4.8" height="21.35" fill="#fecc82"/>
<rect x="959.8" y="1130.45" width="4.8" height="21.35" fill="#a2deff"/>
<rect x="959.8" y="1152.95" width="4.8" height="21.35" fill="#fecc82"/>
<rect x="959.8" y="1175.45" width="4.8" height="21.35" fill="#fecc82"/>
<rect x="959.8" y="1197.95" width="4.8" height="21.35" fill="#a2deff"/>
<rect x="959.8" y="1220.45" width="4.8" height="21.35" fill="#fecc82"/>
<rect x="959.8" y="1242.95" width="4.8" height="21.35" fill="#fecc82"/>
<rect x="959.8" y="1265.45" width="4.8" height="21.35" fill="#a2deff"/>
<rect x="959.8" y="1287.95" width="4.8" height="21.35" fill="#fecc82"/>
<rect x="959.8" y="1310.45" width="4.8" height="21.35" fill="#fecc82"/>
<rect x="959.8" y="1332.95" width="4.8" height="21.35" fill="#a2deff"/>
<rect x="965.7" y="792.95" width="1.7" height="21.35" fill="#a2deff"/>
<rect x="965.7" y="815.45" width="1.7" height="21.35" fill="#a2deff"/>
<rect x="965.7" y="837.95" width="1.7" height="21.35" fill="#a2deff"/>
<rect x="965.7" y="860.45" width="1.7" height="21.35" fill="#a2deff"/>
<rect x="965.7" y="882.95" width="2.3" height="21.35" fill="#a2deff"/>
<rect x="965.7" y="905.45" width="2.3" height="21.35" fill="#a2deff"/>
<rect x="965.7" y="927.95" width="2.3" height="21.35" fill="#a2deff"/>
<rect x="965.7" y="950.45" width="2.3" height="21.35" fill="#a2deff"/>
<rect x="965.7" y="972.95" width="2.3" height="21.35" fill="#a2deff"/>
<rect x="965.7" y="995.45" width="2.3" height="21.35" fill="#a2deff"/>
<rect x="965.7" y="1017.95" width="2.3" height="21.35" fill="#a2deff"/>
<rect x="965.7" y="1040.45" width="2.3" height="21.35" fill="#a2deff"/>
<rect x="965.7" y="1062.95" width="2.3" height="21.35" fill="#a2deff"/>
<rect x="965.7" y="1085.45" width="2.3" height="21.35" fill="#a2deff"/>
<rect x="965.7" y="1107.95" width="2.3" height="21.35" fill="#a2deff"/>
<rect x="965.7" y="1130.45" width="2.3" height="21.35" fill="#a2deff"/>
<rect x="965.7" y="1152.95" width="2.3" height="21.35" fill="#a2deff"/>
<rect x="965.7" y="1175.45" width="2.3" height="21.35" fill="#a2deff"/>
<rect x="968.8" y="770.45" width="161.8" height="21.35" fill="#fecc82"/>
<text x="972.9" y="786.55" font-size="15.4" fill="#121212" letter-spacing="0.74">swapBuffers</text>
<rect x="968.8" y="792.95" width="161.8" height="21.35" fill="#a2deff"/>
<text x="972.9" y="809.05" font-size="15.4" fill="#121212" letter-spacing="0.74">eglSwapBuffe...</text>
<rect x="968.8" y="815.45" width="161.8" height="21.35" fill="#fecc82"/>
<text x="972.9" y="831.55" font-size="15.4" fill="#121212" letter-spacing="0.74">eglSwapBuffe...</text>
<rect x="968.8" y="837.95" width="161.8" height="21.35" fill="#a2deff"/>
<text x="972.9" y="854.05" font-size="15.4" fill="#121212" letter-spacing="0.74">eglSwapBuffers</text>
<rect x="968.8" y="860.45" width="161.8" height="21.35" fill="#a2deff"/>
<text x="972.9" y="876.55" font-size="15.4" fill="#121212" letter-spacing="0.74">e::swapBuffers</text>
<rect x="969.3" y="882.95" width="3.6" height="21.35" fill="#a2deff"/>
<rect x="969.3" y="905.45" width="3.6" height="21.35" fill="#a2deff"/>
<rect x="969.3" y="927.95" width="3.6" height="21.35" fill="#a2deff"/>
<rect x="969.3" y="950.45" width="3.6" height="21.35" fill="#a2deff"/>
<rect x="969.3" y="972.95" width="3.6" height="21.35" fill="#a2deff"/>
<rect x="969.3" y="995.45" width="3.6" height="21.35" fill="#a2deff"/>
<rect x="969.3" y="1017.95" width="3.6" height="21.35" fill="#a2deff"/>
<rect x="969.3" y="1040.45" width="3.6" height="21.35" fill="#a2deff"/>
<rect x="969.3" y="1062.95" width="3.6" height="21.35" fill="#a2deff"/>
<rect x="969.3" y="1085.45" width="3.6" height="21.35" fill="#9feaad"/>
<rect x="969.3" y="1107.95" width="3.6" height="21.35" fill="#9feaad"/>
<rect x="974" y="882.95" width="2.4" height="21.35" fill="#fecc82"/>
<rect x="974" y="905.45" width="2.4" height="21.35" fill="#fecc82"/>
<rect x="974" y="927.95" width="2.4" height="21.35" fill="#a2deff"/>
<rect x="974" y="950.45" width="2.4" height="21.35" fill="#a2deff"/>
<rect x="974" y="972.95" width="2.4" height="21.35" fill="#a2deff"/>
<rect x="974" y="995.45" width="2.4" height="21.35" fill="#a2deff"/>
<rect x="974" y="1017.95" width="2.4" height="21.35" fill="#a2deff"/>
<rect x="974" y="1040.45" width="2.4" height="21.35" fill="#a2deff"/>
<rect x="974" y="1062.95" width="2.4" height="21.35" fill="#a2deff"/>
<rect x="974" y="1085.45" width="2.4" height="21.35" fill="#a2deff"/>
<rect x="974" y="1107.95" width="2.4" height="21.35" fill="#a2deff"/>
<rect x="974" y="1130.45" width="2.4" height="21.35" fill="#a2deff"/>
<rect x="974" y="1152.95" width="2.4" height="21.35" fill="#a2deff"/>
<rect x="974" y="1175.45" width="2.4" height="21.35" fill="#a2deff"/>
<rect x="974" y="1197.95" width="2.4" height="21.35" fill="#a2deff"/>
<rect x="974" y="1220.45" width="2.4" height="21.35" fill="#a2deff"/>
<rect x="974" y="1242.95" width="2.4" height="21.35" fill="#a2deff"/>
<rect x="974" y="1265.45" width="2.4" height="21.35" fill="#a2deff"/>
<rect x="974" y="1287.95" width="2.4" height="21.35" fill="#a2deff"/>
<rect x="968.9" y="1130.45" width="1" height="21.35" fill="#a2deff"/>
<rect x="968.9" y="1152.95" width="1" height="21.35" fill="#a2deff"/>
<rect x="968.9" y="1175.45" width="1" height="21.35" fill="#a2deff"/>
<rect x="968.9" y="1197.95" width="1" height="21.35" fill="#a2deff"/>
<rect x="968.9" y="1220.45" width="1" height="21.35" fill="#a2deff"/>
<rect x="968.9" y="1242.95" width="1" height="21.35" fill="#a2deff"/>
<rect x="968.9" y="1265.45" width="1" height="21.35" fill="#a2deff"/>
<rect x="968.9" y="1287.95" width="1" height="21.35" fill="#a2deff"/>
<rect x="968.9" y="1310.45" width="1" height="21.35" fill="#a2deff"/>
<rect x="968.9" y="1332.95" width="1" height="21.35" fill="#a2deff"/>
<rect x="973.4" y="1310.45" width="0.7" height="21.35" fill="#a2deff"/>
<rect x="973.4" y="1332.95" width="0.7" height="21.35" fill="#a2deff"/>
<rect x="978" y="882.95" width="152.6" height="21.35" fill="#fecc82"/>
<text x="982.1" y="899.05" font-size="15.4" fill="#121212" letter-spacing="0.74">hook_dequeu...</text>
<rect x="978" y="905.45" width="152.6" height="21.35" fill="#fecc82"/>
<text x="982.1" y="921.55" font-size="15.4" fill="#121212" letter-spacing="0.74">hook_dequeu...</text>
<rect x="978" y="927.95" width="152.6" height="21.35" fill="#fecc82"/>
<text x="982.1" y="944.05" font-size="15.4" fill="#121212" letter-spacing="0.74">dequeueBuffer</text>
<rect x="978" y="950.45" width="152.6" height="21.35" fill="#fecc82"/>
<text x="982.1" y="966.55" font-size="15.4" fill="#121212" letter-spacing="0.74">dequeueBuffer</text>
<rect x="978" y="972.95" width="152.6" height="21.35" fill="#a2deff"/>
<text x="982.1" y="989.05" font-size="15.4" fill="#121212" letter-spacing="0.74">__do_timed_...</text>
<rect x="978" y="995.45" width="152.6" height="21.35" fill="#a2deff"/>
<text x="982.1" y="1011.55" font-size="15.4" fill="#121212" letter-spacing="0.74">pthread_con...</text>
<rect x="978" y="1017.95" width="152.6" height="21.35" fill="#a2deff"/>
<text x="982.1" y="1034.05" font-size="15.4" fill="#121212" letter-spacing="0.74">__futex_wai...</text>
<rect x="978" y="1040.45" width="152.6" height="21.35" fill="#a2deff"/>
<text x="982.1" y="1056.55" font-size="15.4" fill="#121212" letter-spacing="0.74">syscall</text>
<rect x="978" y="1062.95" width="152.6" height="21.35" fill="#a2deff"/>
<text x="982.1" y="1079.05" font-size="15.4" fill="#121212" letter-spacing="0.74">entry_SYSCA...</text>
<rect x="978" y="1085.45" width="152.6" height="21.35" fill="#a2deff"/>
<text x="982.1" y="1101.55" font-size="15.4" fill="#121212" letter-spacing="0.74">do_syscall_64</text>
<rect x="978" y="1107.95" width="152.6" height="21.35" fill="#a2deff"/>
<text x="982.1" y="1124.05" font-size="15.4" fill="#121212" letter-spacing="0.74">__x64_sys_f...</text>
<rect x="978" y="1130.45" width="152.6" height="21.35" fill="#a2deff"/>
<text x="982.1" y="1146.55" font-size="15.4" fill="#121212" letter-spacing="0.74">__se_sys_futex</text>
<rect x="978" y="1152.95" width="152.6" height="21.35" fill="#a2deff"/>
<text x="982.1" y="1169.05" font-size="15.4" fill="#121212" letter-spacing="0.74">do_futex</text>
<rect x="978" y="1175.45" width="152.6" height="21.35" fill="#a2deff"/>
<text x="982.1" y="1191.55" font-size="15.4" fill="#121212" letter-spacing="0.74">futex_wait</text>
<rect x="978" y="1197.95" width="152.6" height="21.35" fill="#a2deff"/>
<text x="982.1" y="1214.05" font-size="15.4" fill="#121212" letter-spacing="0.74">futex_wait_...</text>
<rect x="978" y="1220.45" width="152.6" height="21.35" fill="#a2deff"/>
<text x="982.1" y="1236.55" font-size="15.4" fill="#121212" letter-spacing="0.74">schedule</text>
<rect x="978" y="1242.95" width="152.6" height="21.35" fill="#a2deff"/>
<text x="982.1" y="1259.05" font-size="15.4" fill="#121212" letter-spacing="0.74">__schedule</text>
<rect x="978" y="1265.45" width="152.6" height="21.35" fill="#a2deff"/>
<text x="982.1" y="1281.55" font-size="15.4" fill="#121212" letter-spacing="0.74">__traceiter...</text>
<rect x="978" y="1287.95" width="152.6" height="21.35" fill="#a2deff"/>
<text x="982.1" y="1304.05" font-size="15.4" fill="#121212" letter-spacing="0.74">__traceiter...</text>
<rect x="1131.8" y="770.45" width="53.8" height="21.35" fill="#fecc82"/>
<text x="1135.9" y="786.55" font-size="15.4" fill="#121212" letter-spacing="0.74">draw</text>
<rect x="1131.8" y="792.95" width="6.3" height="21.35" fill="#fecc82"/>
<rect x="1131.8" y="815.45" width="6.3" height="21.35" fill="#fecc82"/>
<rect x="1131.8" y="837.95" width="6.3" height="21.35" fill="#fecc82"/>
<rect x="1131.8" y="860.45" width="6.3" height="21.35" fill="#a2deff"/>
<rect x="1131.8" y="882.95" width="6.3" height="21.35" fill="#fecc82"/>
<rect x="1131.8" y="905.45" width="6.3" height="21.35" fill="#fecc82"/>
<rect x="1131.8" y="927.95" width="6.3" height="21.35" fill="#a2deff"/>
<rect x="1131.8" y="950.45" width="6.3" height="21.35" fill="#fecc82"/>
<rect x="1131.8" y="972.95" width="6.3" height="21.35" fill="#fecc82"/>
<rect x="1131.8" y="995.45" width="6.3" height="21.35" fill="#a2deff"/>
<rect x="1131.8" y="1017.95" width="6.3" height="21.35" fill="#fecc82"/>
<rect x="1131.8" y="1040.45" width="6.3" height="21.35" fill="#fecc82"/>
<rect x="1131.8" y="1062.95" width="6.3" height="21.35" fill="#a2deff"/>
<rect x="1131.8" y="1085.45" width="6.3" height="21.35" fill="#fecc82"/>
<rect x="1131.8" y="1107.95" width="6.3" height="21.35" fill="#fecc82"/>
<rect x="1131.8" y="1130.45" width="6.3" height="21.35" fill="#a2deff"/>
<rect x="1131.8" y="1152.95" width="6.3" height="21.35" fill="#fecc82"/>
<rect x="1131.8" y="1175.45" width="6.3" height="21.35" fill="#fecc82"/>
<rect x="1131.8" y="1197.95" width="6.3" height="21.35" fill="#a2deff"/>
<rect x="1131.8" y="1220.45" width="6.3" height="21.35" fill="#fecc82"/>
<rect x="1131.8" y="1242.95" width="6.3" height="21.35" fill="#fecc82"/>
<rect x="1131.8" y="1265.45" width="6.3" height="21.35" fill="#a2deff"/>
<rect x="1131.8" y="1287.95" width="6.3" height="21.35" fill="#fecc82"/>
<rect x="1131.8" y="1310.45" width="6.3" height="21.35" fill="#fecc82"/>
<rect x="1131.8" y="1332.95" width="6.3" height="21.35" fill="#a2deff"/>
<rect x="1139.2" y="792.95" width="46.4" height="21.35" fill="#a2deff"/>
<rect x="1139.2" y="815.45" width="46.4" height="21.35" fill="#a2deff"/>
<rect x="1139.2" y="837.95" width="1.8" height="21.35" fill="#a2deff"/>
<rect x="1139.2" y="860.45" width="1.8" height="21.35" fill="#a2deff"/>
<rect x="1139.2" y="882.95" width="1.8" height="21.35" fill="#a2deff"/>
<rect x="1139.2" y="905.45" width="1.8" height="21.35" fill="#a2deff"/>
<rect x="1139.2" y="927.95" width="1.8" height="21.35" fill="#a2deff"/>
<rect x="1139.2" y="950.45" width="1.8" height="21.35" fill="#a2deff"/>
<rect x="1139.2" y="972.95" width="1.8" height="21.35" fill="#a2deff"/>
<rect x="1139.2" y="995.45" width="1.8" height="21.35" fill="#a2deff"/>
<rect x="1139.2" y="1017.95" width="1.8" height="21.35" fill="#a2deff"/>
<rect x="1139.2" y="1040.45" width="1.8" height="21.35" fill="#a2deff"/>
<rect x="1139.2" y="1062.95" width="1.8" height="21.35" fill="#a2deff"/>
<rect x="1139.2" y="1085.45" width="1.8" height="21.35" fill="#a2deff"/>
<rect x="1139.2" y="1107.95" width="1.8" height="21.35" fill="#a2deff"/>
<rect x="1139.2" y="1130.45" width="1.8" height="21.35" fill="#9feaad"/>
<rect x="1139.2" y="1152.95" width="1.8" height="21.35" fill="#9feaad"/>
<rect x="1139.2" y="1175.45" width="1.8" height="21.35" fill="#a2deff"/>
<rect x="1139.2" y="1197.95" width="1.8" height="21.35" fill="#a2deff"/>
<rect x="1139.2" y="1220.45" width="1.8" height="21.35" fill="#a2deff"/>
<rect x="1139.2" y="1242.95" width="1.8" height="21.35" fill="#a2deff"/>
<rect x="1139.2" y="1265.45" width="1.8" height="21.35" fill="#a2deff"/>
<rect x="1139.2" y="1287.95" width="1.8" height="21.35" fill="#a2deff"/>
<rect x="1139.2" y="1310.45" width="1.8" height="21.35" fill="#a2deff"/>
<rect x="1142.6" y="837.95" width="36.5" height="21.35" fill="#a2deff"/>
<rect x="1142.6" y="860.45" width="36.5" height="21.35" fill="#a2deff"/>
<rect x="1142.6" y="882.95" width="36.5" height="21.35" fill="#a2deff"/>
<rect x="1142.6" y="905.45" width="36.5" height="21.35" fill="#a2deff"/>
<rect x="1142.6" y="927.95" width="36.5" height="21.35" fill="#a2deff"/>
<rect x="1142.6" y="950.45" width="36.5" height="21.35" fill="#a2deff"/>
<rect x="1142.6" y="972.95" width="36.5" height="21.35" fill="#a2deff"/>
<rect x="1142.6" y="995.45" width="36.5" height="21.35" fill="#a2deff"/>
<rect x="1142.6" y="1017.95" width="36.5" height="21.35" fill="#a2deff"/>
<rect x="1142.6" y="1040.45" width="36.5" height="21.35" fill="#a2deff"/>
<rect x="1142.6" y="1062.95" width="36.5" height="21.35" fill="#a2deff"/>
<rect x="1142.6" y="1085.45" width="36.5" height="21.35" fill="#a2deff"/>
<rect x="1142.6" y="1107.95" width="36.5" height="21.35" fill="#a2deff"/>
<rect x="1142.6" y="1130.45" width="36.5" height="21.35" fill="#a2deff"/>
<rect x="1142.6" y="1152.95" width="36.5" height="21.35" fill="#a2deff"/>
<rect x="1142.6" y="1175.45" width="36.5" height="21.35" fill="#a2deff"/>
<rect x="1142.6" y="1197.95" width="36.5" height="21.35" fill="#a2deff"/>
<rect x="1142.6" y="1220.45" width="36.5" height="21.35" fill="#a2deff"/>
<rect x="1142.6" y="1242.95" width="36.5" height="21.35" fill="#a2deff"/>
<rect x="1142.6" y="1265.45" width="36.5" height="21.35" fill="#9feaad"/>
<rect x="1142.6" y="1287.95" width="36.5" height="21.35" fill="#9feaad"/>
<rect x="1180.3" y="837.95" width="5.1" height="21.35" fill="#a2deff"/>
<rect x="1180.3" y="860.45" width="5.1" height="21.35" fill="#a2deff"/>
<rect x="1180.3" y="882.95" width="5.1" height="21.35" fill="#a2deff"/>
<rect x="1180.3" y="905.45" width="5.1" height="21.35" fill="#a2deff"/>
<rect x="1180.3" y="927.95" width="5.1" height="21.35" fill="#a2deff"/>
<rect x="1180.3" y="950.45" width="5.1" height="21.35" fill="#a2deff"/>
<rect x="1180.3" y="972.95" width="5.1" height="21.35" fill="#a2deff"/>
<rect x="1180.3" y="995.45" width="5.1" height="21.35" fill="#a2deff"/>
<rect x="1180.3" y="1017.95" width="5.1" height="21.35" fill="#a2deff"/>
<rect x="1180.3" y="1040.45" width="5.1" height="21.35" fill="#a2deff"/>
<rect x="1180.3" y="1062.95" width="5.1" height="21.35" fill="#a2deff"/>
<rect x="1180.3" y="1085.45" width="5.1" height="21.35" fill="#a2deff"/>
<rect x="1180.3" y="1107.95" width="5.1" height="21.35" fill="#a2deff"/>
<rect x="1180.3" y="1130.45" width="5.1" height="21.35" fill="#a2deff"/>
<rect x="1180.3" y="1152.95" width="5.1" height="21.35" fill="#a2deff"/>
<rect x="1180.3" y="1175.45" width="5.1" height="21.35" fill="#a2deff"/>
<rect x="1180.3" y="1197.95" width="5.1" height="21.35" fill="#a2deff"/>
<rect x="1180.3" y="1220.45" width="5.1" height="21.35" fill="#a2deff"/>
<rect x="1180.3" y="1242.95" width="5.1" height="21.35" fill="#a2deff"/>
<rect x="1180.3" y="1265.45" width="5.1" height="21.35" fill="#a2deff"/>
<rect x="1180.3" y="1287.95" width="5.1" height="21.35" fill="#a2deff"/>
<rect x="1144.5" y="1310.45" width="3" height="21.35" fill="#a2deff"/>
<rect x="1144.5" y="1332.95" width="3" height="21.35" fill="#a2deff"/>
<rect x="1150.5" y="1310.45" width="2.5" height="21.35" fill="#a2deff"/>
<rect x="1150.5" y="1332.95" width="2.5" height="21.35" fill="#a2deff"/>
<rect x="1155" y="1310.45" width="2.5" height="21.35" fill="#a2deff"/>
<rect x="1155" y="1332.95" width="2.5" height="21.35" fill="#a2deff"/>
<rect x="1159.5" y="1310.45" width="1.5" height="21.35" fill="#a2deff"/>
<rect x="1159.5" y="1332.95" width="1.5" height="21.35" fill="#a2deff"/>
<rect x="1164.5" y="1310.45" width="7.6" height="21.35" fill="#a2deff"/>
<rect x="1164.5" y="1332.95" width="7.6" height="21.35" fill="#a2deff"/>
<rect x="1174.5" y="1310.45" width="4.1" height="21.35" fill="#a2deff"/>
<rect x="1174.5" y="1332.95" width="4.1" height="21.35" fill="#a2deff"/>
<rect x="1181" y="1310.45" width="4.1" height="21.35" fill="#a2deff"/>
<rect x="1181" y="1332.95" width="4.1" height="21.35" fill="#a2deff"/>
<rect x="1187.5" y="1310.45" width="4.1" height="21.35" fill="#a2deff"/>
<rect x="1187.5" y="1332.95" width="4.1" height="21.35" fill="#a2deff"/>
<rect x="1180.5" y="1332.95" width="6.1" height="21.35" fill="#3c3f41"/>
<rect x="1186.3" y="770.45" width="136.8" height="21.35" fill="#fecc82"/>
<text x="1190.4" y="786.55" font-size="15.4" fill="#121212" letter-spacing="0.74">swapBuffers</text>
<rect x="1186.3" y="792.95" width="136.8" height="21.35" fill="#a2deff"/>
<text x="1190.4" y="809.05" font-size="15.4" fill="#121212" letter-spacing="0.74">eglSwapBu...</text>
<rect x="1186.3" y="815.45" width="136.8" height="21.35" fill="#fecc82"/>
<text x="1190.4" y="831.55" font-size="15.4" fill="#121212" letter-spacing="0.74">eglSwapBu...</text>
<rect x="1186.3" y="837.95" width="136.8" height="21.35" fill="#a2deff"/>
<text x="1190.4" y="854.05" font-size="15.4" fill="#121212" letter-spacing="0.74">eglSwapBu...</text>
<rect x="1186.3" y="860.45" width="136.8" height="21.35" fill="#a2deff"/>
<text x="1190.4" y="876.55" font-size="15.4" fill="#121212" letter-spacing="0.74">swapBuffers</text>
<rect x="1186.3" y="882.95" width="6.2" height="21.35" fill="#fecc82"/>
<rect x="1186.3" y="905.45" width="6.2" height="21.35" fill="#fecc82"/>
<rect x="1186.3" y="927.95" width="6.2" height="21.35" fill="#fecc82"/>
<rect x="1186.3" y="950.45" width="6.2" height="21.35" fill="#fecc82"/>
<rect x="1186.3" y="972.95" width="6.2" height="21.35" fill="#fecc82"/>
<rect x="1186.3" y="995.45" width="6.2" height="21.35" fill="#fecc82"/>
<rect x="1186.3" y="1017.95" width="6.2" height="21.35" fill="#fecc82"/>
<rect x="1186.3" y="1040.45" width="1.5" height="21.35" fill="#a2deff"/>
<rect x="1186.3" y="1062.95" width="1.5" height="21.35" fill="#a2deff"/>
<rect x="1186.3" y="1085.45" width="1.5" height="21.35" fill="#a2deff"/>
<rect x="1186.3" y="1107.95" width="1.5" height="21.35" fill="#a2deff"/>
<rect x="1186.3" y="1130.45" width="1.5" height="21.35" fill="#a2deff"/>
<rect x="1186.3" y="1152.95" width="1.5" height="21.35" fill="#a2deff"/>
<rect x="1186.3" y="1175.45" width="1.5" height="21.35" fill="#a2deff"/>
<rect x="1186.3" y="1197.95" width="1.5" height="21.35" fill="#a2deff"/>
<rect x="1186.3" y="1220.45" width="1.5" height="21.35" fill="#a2deff"/>
<rect x="1186.3" y="1242.95" width="1.5" height="21.35" fill="#a2deff"/>
<rect x="1186.3" y="1265.45" width="1.5" height="21.35" fill="#a2deff"/>
<rect x="1186.3" y="1287.95" width="1.5" height="21.35" fill="#a2deff"/>
<rect x="1189" y="1040.45" width="3.5" height="21.35" fill="#fecc82"/>
<rect x="1189" y="1062.95" width="3.5" height="21.35" fill="#fecc82"/>
<rect x="1189" y="1085.45" width="3.5" height="21.35" fill="#fecc82"/>
<rect x="1189" y="1107.95" width="3.5" height="21.35" fill="#fecc82"/>
<rect x="1189" y="1130.45" width="3.5" height="21.35" fill="#a2deff"/>
<rect x="1189" y="1152.95" width="3.5" height="21.35" fill="#a2deff"/>
<rect x="1189" y="1175.45" width="3.5" height="21.35" fill="#a2deff"/>
<rect x="1189" y="1197.95" width="3.5" height="21.35" fill="#a2deff"/>
<rect x="1189" y="1220.45" width="3.5" height="21.35" fill="#a2deff"/>
<rect x="1189" y="1242.95" width="3.5" height="21.35" fill="#a2deff"/>
<rect x="1189" y="1265.45" width="3.5" height="21.35" fill="#a2deff"/>
<rect x="1189" y="1287.95" width="3.5" height="21.35" fill="#a2deff"/>
<rect x="1193.6" y="882.95" width="129.5" height="21.35" fill="#fecc82"/>
<text x="1197.7" y="899.05" font-size="15.4" fill="#121212" letter-spacing="0.74">hook_dequ...</text>
<rect x="1193.6" y="905.45" width="129.5" height="21.35" fill="#fecc82"/>
<text x="1197.7" y="921.55" font-size="15.4" fill="#121212" letter-spacing="0.74">hook_dequ...</text>
<rect x="1193.6" y="927.95" width="129.5" height="21.35" fill="#fecc82"/>
<text x="1197.7" y="944.05" font-size="15.4" fill="#121212" letter-spacing="0.74">dequeueBu...</text>
<rect x="1193.6" y="950.45" width="129.5" height="21.35" fill="#fecc82"/>
<text x="1197.7" y="966.55" font-size="15.4" fill="#121212" letter-spacing="0.74">dequeueBu...</text>
<rect x="1193.6" y="972.95" width="129.5" height="21.35" fill="#a2deff"/>
<text x="1197.7" y="989.05" font-size="15.4" fill="#121212" letter-spacing="0.74">__do_time...</text>
<rect x="1193.6" y="995.45" width="129.5" height="21.35" fill="#a2deff"/>
<text x="1197.7" y="1011.55" font-size="15.4" fill="#121212" letter-spacing="0.74">pthread_c...</text>
<rect x="1193.6" y="1017.95" width="129.5" height="21.35" fill="#a2deff"/>
<text x="1197.7" y="1034.05" font-size="15.4" fill="#121212" letter-spacing="0.74">__futex_w...</text>
<rect x="1193.6" y="1040.45" width="129.5" height="21.35" fill="#a2deff"/>
<text x="1197.7" y="1056.55" font-size="15.4" fill="#121212" letter-spacing="0.74">syscall</text>
<rect x="1193.6" y="1062.95" width="129.5" height="21.35" fill="#a2deff"/>
<text x="1197.7" y="1079.05" font-size="15.4" fill="#121212" letter-spacing="0.74">entry_SYS...</text>
<rect x="1193.6" y="1085.45" width="129.5" height="21.35" fill="#a2deff"/>
<text x="1197.7" y="1101.55" font-size="15.4" fill="#121212" letter-spacing="0.74">do_syscal...</text>
<rect x="1193.6" y="1107.95" width="129.5" height="21.35" fill="#a2deff"/>
<text x="1197.7" y="1124.05" font-size="15.4" fill="#121212" letter-spacing="0.74">__x64_sys...</text>
<rect x="1193.6" y="1130.45" width="129.5" height="21.35" fill="#a2deff"/>
<text x="1197.7" y="1146.55" font-size="15.4" fill="#121212" letter-spacing="0.74">__se_sys_...</text>
<rect x="1193.6" y="1152.95" width="129.5" height="21.35" fill="#a2deff"/>
<text x="1197.7" y="1169.05" font-size="15.4" fill="#121212" letter-spacing="0.74">do_futex</text>
<rect x="1193.6" y="1175.45" width="129.5" height="21.35" fill="#a2deff"/>
<text x="1197.7" y="1191.55" font-size="15.4" fill="#121212" letter-spacing="0.74">futex_wait</text>
<rect x="1193.6" y="1197.95" width="129.5" height="21.35" fill="#a2deff"/>
<text x="1197.7" y="1214.05" font-size="15.4" fill="#121212" letter-spacing="0.74">futex_wai...</text>
<rect x="1193.6" y="1220.45" width="129.5" height="21.35" fill="#a2deff"/>
<text x="1197.7" y="1236.55" font-size="15.4" fill="#121212" letter-spacing="0.74">schedule</text>
<rect x="1193.6" y="1242.95" width="129.5" height="21.35" fill="#a2deff"/>
<text x="1197.7" y="1259.05" font-size="15.4" fill="#121212" letter-spacing="0.74">__schedule</text>
<rect x="1193.6" y="1265.45" width="122.5" height="21.35" fill="#a2deff"/>
<text x="1197.7" y="1281.55" font-size="15.4" fill="#121212" letter-spacing="0.74">__tracei...</text>
<rect x="1317.3" y="1265.45" width="5.3" height="21.35" fill="#a2deff"/>
<rect x="1193.6" y="1287.95" width="122.5" height="21.35" fill="#a2deff"/>
<text x="1197.7" y="1304.05" font-size="15.4" fill="#121212" letter-spacing="0.74">__tracei...</text>
<rect x="1324.3" y="770.45" width="24.8" height="21.35" fill="#fecc82"/>
<rect x="1324.3" y="792.95" width="3.4" height="21.35" fill="#fecc82"/>
<rect x="1324.3" y="815.45" width="3.4" height="21.35" fill="#fecc82"/>
<rect x="1324.3" y="837.95" width="3.4" height="21.35" fill="#fecc82"/>
<rect x="1324.3" y="860.45" width="3.4" height="21.35" fill="#a2deff"/>
<rect x="1324.3" y="882.95" width="3.4" height="21.35" fill="#fecc82"/>
<rect x="1324.3" y="905.45" width="3.4" height="21.35" fill="#fecc82"/>
<rect x="1324.3" y="927.95" width="3.4" height="21.35" fill="#a2deff"/>
<rect x="1324.3" y="950.45" width="3.4" height="21.35" fill="#fecc82"/>
<rect x="1324.3" y="972.95" width="3.4" height="21.35" fill="#fecc82"/>
<rect x="1324.3" y="995.45" width="3.4" height="21.35" fill="#a2deff"/>
<rect x="1324.3" y="1017.95" width="3.4" height="21.35" fill="#fecc82"/>
<rect x="1324.3" y="1040.45" width="3.4" height="21.35" fill="#fecc82"/>
<rect x="1324.3" y="1062.95" width="3.4" height="21.35" fill="#a2deff"/>
<rect x="1324.3" y="1085.45" width="3.4" height="21.35" fill="#fecc82"/>
<rect x="1324.3" y="1107.95" width="3.4" height="21.35" fill="#fecc82"/>
<rect x="1324.3" y="1130.45" width="3.4" height="21.35" fill="#a2deff"/>
<rect x="1324.3" y="1152.95" width="3.4" height="21.35" fill="#fecc82"/>
<rect x="1324.3" y="1175.45" width="3.4" height="21.35" fill="#fecc82"/>
<rect x="1324.3" y="1197.95" width="3.4" height="21.35" fill="#a2deff"/>
<rect x="1324.3" y="1220.45" width="3.4" height="21.35" fill="#fecc82"/>
<rect x="1324.3" y="1242.95" width="3.4" height="21.35" fill="#fecc82"/>
<rect x="1324.3" y="1265.45" width="3.4" height="21.35" fill="#a2deff"/>
<rect x="1324.3" y="1287.95" width="3.4" height="21.35" fill="#fecc82"/>
<rect x="1324.3" y="1310.45" width="3.4" height="21.35" fill="#fecc82"/>
<rect x="1324.3" y="1332.95" width="3.4" height="21.35" fill="#a2deff"/>
<rect x="1329" y="792.95" width="20.1" height="21.35" fill="#a2deff"/>
<rect x="1329" y="815.45" width="20.1" height="21.35" fill="#a2deff"/>
<rect x="1329" y="837.95" width="3.7" height="21.35" fill="#a2deff"/>
<rect x="1329" y="860.45" width="3.7" height="21.35" fill="#a2deff"/>
<rect x="1329" y="882.95" width="3.7" height="21.35" fill="#a2deff"/>
<rect x="1329" y="905.45" width="3.7" height="21.35" fill="#a2deff"/>
<rect x="1329" y="927.95" width="3.7" height="21.35" fill="#a2deff"/>
<rect x="1329" y="950.45" width="3.7" height="21.35" fill="#a2deff"/>
<rect x="1329" y="972.95" width="3.7" height="21.35" fill="#a2deff"/>
<rect x="1329" y="995.45" width="3.7" height="21.35" fill="#a2deff"/>
<rect x="1329" y="1017.95" width="3.7" height="21.35" fill="#a2deff"/>
<rect x="1329" y="1040.45" width="3.7" height="21.35" fill="#a2deff"/>
<rect x="1329" y="1062.95" width="3.7" height="21.35" fill="#a2deff"/>
<rect x="1329" y="1085.45" width="3.7" height="21.35" fill="#9feaad"/>
<rect x="1329" y="1107.95" width="3.7" height="21.35" fill="#9feaad"/>
<rect x="1334" y="837.95" width="15.1" height="21.35" fill="#a2deff"/>
<rect x="1334" y="860.45" width="15.1" height="21.35" fill="#a2deff"/>
<rect x="1334" y="882.95" width="15.1" height="21.35" fill="#a2deff"/>
<rect x="1334" y="905.45" width="15.1" height="21.35" fill="#a2deff"/>
<rect x="1334" y="927.95" width="15.1" height="21.35" fill="#a2deff"/>
<rect x="1334" y="950.45" width="15.1" height="21.35" fill="#a2deff"/>
<rect x="1334" y="972.95" width="15.1" height="21.35" fill="#a2deff"/>
<rect x="1334" y="995.45" width="15.1" height="21.35" fill="#a2deff"/>
<rect x="1334" y="1017.95" width="15.1" height="21.35" fill="#a2deff"/>
<rect x="1334" y="1040.45" width="15.1" height="21.35" fill="#a2deff"/>
<rect x="1334" y="1062.95" width="15.1" height="21.35" fill="#a2deff"/>
<rect x="1334" y="1085.45" width="15.1" height="21.35" fill="#a2deff"/>
<rect x="1334" y="1107.95" width="15.1" height="21.35" fill="#a2deff"/>
<rect x="1334" y="1130.45" width="15.1" height="21.35" fill="#a2deff"/>
<rect x="1334" y="1152.95" width="15.1" height="21.35" fill="#a2deff"/>
<rect x="1334" y="1175.45" width="15.1" height="21.35" fill="#a2deff"/>
<rect x="1334" y="1197.95" width="15.1" height="21.35" fill="#a2deff"/>
<rect x="1334" y="1220.45" width="15.1" height="21.35" fill="#a2deff"/>
<rect x="1334" y="1242.95" width="15.1" height="21.35" fill="#a2deff"/>
<rect x="1334" y="1265.45" width="15.1" height="21.35" fill="#9feaad"/>
<rect x="1334" y="1287.95" width="15.1" height="21.35" fill="#9feaad"/>
<rect x="1335.2" y="1310.45" width="3.5" height="21.35" fill="#a2deff"/>
<rect x="1335.2" y="1332.95" width="3.5" height="21.35" fill="#a2deff"/>
<rect x="1339.8" y="1310.45" width="1.2" height="21.35" fill="#a2deff"/>
<rect x="1339.8" y="1332.95" width="1.2" height="21.35" fill="#a2deff"/>
<rect x="1350.2" y="770.45" width="228.2" height="21.35" fill="#fecc82"/>
<text x="1354.3" y="786.55" font-size="15.4" fill="#121212" letter-spacing="0.74">swapBuffers</text>
<rect x="1350.2" y="792.95" width="228.2" height="21.35" fill="#a2deff"/>
<text x="1354.3" y="809.05" font-size="15.4" fill="#121212" letter-spacing="0.74">eglSwapBuffersWithD...</text>
<rect x="1350.2" y="815.45" width="228.2" height="21.35" fill="#fecc82"/>
<text x="1354.3" y="831.55" font-size="15.4" fill="#121212" letter-spacing="0.74">eglSwapBuffersWithD...</text>
<rect x="1350.2" y="837.95" width="228.2" height="21.35" fill="#a2deff"/>
<text x="1354.3" y="854.05" font-size="15.4" fill="#121212" letter-spacing="0.74">eglSwapBuffers</text>
<rect x="1350.2" y="860.45" width="228.2" height="21.35" fill="#a2deff"/>
<text x="1354.3" y="876.55" font-size="15.4" fill="#121212" letter-spacing="0.74">e::swapBuffers</text>
<rect x="1350.2" y="882.95" width="7.7" height="21.35" fill="#fecc82"/>
<rect x="1350.2" y="905.45" width="7.7" height="21.35" fill="#fecc82"/>
<rect x="1350.2" y="927.95" width="7.7" height="21.35" fill="#fecc82"/>
<rect x="1350.2" y="950.45" width="7.7" height="21.35" fill="#fecc82"/>
<rect x="1350.2" y="972.95" width="7.7" height="21.35" fill="#fecc82"/>
<rect x="1350.2" y="995.45" width="7.7" height="21.35" fill="#fecc82"/>
<rect x="1350.2" y="1017.95" width="7.7" height="21.35" fill="#fecc82"/>
<rect x="1350.2" y="1040.45" width="7.7" height="21.35" fill="#fecc82"/>
<rect x="1350.2" y="1062.95" width="7.7" height="21.35" fill="#fecc82"/>
<rect x="1350.2" y="1085.45" width="7.7" height="21.35" fill="#fecc82"/>
<rect x="1350.2" y="1107.95" width="7.7" height="21.35" fill="#fecc82"/>
<rect x="1350.2" y="1130.45" width="7.7" height="21.35" fill="#a2deff"/>
<rect x="1350.2" y="1152.95" width="7.7" height="21.35" fill="#a2deff"/>
<rect x="1350.2" y="1175.45" width="7.7" height="21.35" fill="#a2deff"/>
<rect x="1350.2" y="1197.95" width="7.7" height="21.35" fill="#a2deff"/>
<rect x="1350.2" y="1220.45" width="7.7" height="21.35" fill="#a2deff"/>
<rect x="1350.2" y="1242.95" width="7.7" height="21.35" fill="#a2deff"/>
<rect x="1350.2" y="1265.45" width="7.7" height="21.35" fill="#a2deff"/>
<rect x="1350.2" y="1287.95" width="7.7" height="21.35" fill="#a2deff"/>
<rect x="1350.2" y="1310.45" width="7.7" height="21.35" fill="#a2deff"/>
<rect x="1350.2" y="1332.95" width="7.7" height="21.35" fill="#a2deff"/>
<rect x="1359.2" y="882.95" width="219.2" height="21.35" fill="#fecc82"/>
<text x="1363.3" y="899.05" font-size="15.4" fill="#121212" letter-spacing="0.74">hook_dequeueBuffer</text>
<rect x="1359.2" y="905.45" width="219.2" height="21.35" fill="#fecc82"/>
<text x="1363.3" y="921.55" font-size="15.4" fill="#121212" letter-spacing="0.74">hook_dequeueBuffer</text>
<rect x="1359.2" y="927.95" width="219.2" height="21.35" fill="#fecc82"/>
<text x="1363.3" y="944.05" font-size="15.4" fill="#121212" letter-spacing="0.74">a::S::dequeueBuffer</text>
<rect x="1359.2" y="950.45" width="219.2" height="21.35" fill="#fecc82"/>
<text x="1363.3" y="966.55" font-size="15.4" fill="#121212" letter-spacing="0.74">a::B::dequeueBuffer</text>
<rect x="1359.2" y="972.95" width="219.2" height="21.35" fill="#a2deff"/>
<text x="1363.3" y="989.05" font-size="15.4" fill="#121212" letter-spacing="0.74">__do_timed_wait</text>
<rect x="1359.2" y="995.45" width="219.2" height="21.35" fill="#a2deff"/>
<text x="1363.3" y="1011.55" font-size="15.4" fill="#121212" letter-spacing="0.74">pthread_cond_timed...</text>
<rect x="1359.2" y="1017.95" width="219.2" height="21.35" fill="#a2deff"/>
<text x="1363.3" y="1034.05" font-size="15.4" fill="#121212" letter-spacing="0.74">__futex_wait_ex</text>
<rect x="1359.2" y="1040.45" width="219.2" height="21.35" fill="#a2deff"/>
<text x="1363.3" y="1056.55" font-size="15.4" fill="#121212" letter-spacing="0.74">syscall</text>
<rect x="1359.2" y="1062.95" width="219.2" height="21.35" fill="#a2deff"/>
<text x="1363.3" y="1079.05" font-size="15.4" fill="#121212" letter-spacing="0.74">entry_SYSCALL_64_a...</text>
<rect x="1359.2" y="1085.45" width="219.2" height="21.35" fill="#a2deff"/>
<text x="1363.3" y="1101.55" font-size="15.4" fill="#121212" letter-spacing="0.74">do_syscall_64</text>
<rect x="1359.2" y="1107.95" width="219.2" height="21.35" fill="#a2deff"/>
<text x="1363.3" y="1124.05" font-size="15.4" fill="#121212" letter-spacing="0.74">__x64_sys_futex</text>
<rect x="1359.2" y="1130.45" width="219.2" height="21.35" fill="#a2deff"/>
<text x="1363.3" y="1146.55" font-size="15.4" fill="#121212" letter-spacing="0.74">__se_sys_futex</text>
<rect x="1359.2" y="1152.95" width="219.2" height="21.35" fill="#a2deff"/>
<text x="1363.3" y="1169.05" font-size="15.4" fill="#121212" letter-spacing="0.74">do_futex</text>
<rect x="1359.2" y="1175.45" width="219.2" height="21.35" fill="#a2deff"/>
<text x="1363.3" y="1191.55" font-size="15.4" fill="#121212" letter-spacing="0.74">futex_wait</text>
<rect x="1359.2" y="1197.95" width="219.2" height="21.35" fill="#a2deff"/>
<text x="1363.3" y="1214.05" font-size="15.4" fill="#121212" letter-spacing="0.74">futex_wait_queue_me</text>
<rect x="1359.2" y="1220.45" width="219.2" height="21.35" fill="#a2deff"/>
<text x="1363.3" y="1236.55" font-size="15.4" fill="#121212" letter-spacing="0.74">schedule</text>
<rect x="1359.2" y="1242.95" width="219.2" height="21.35" fill="#a2deff"/>
<text x="1363.3" y="1259.05" font-size="15.4" fill="#121212" letter-spacing="0.74">__schedule</text>
<rect x="1359.2" y="1265.45" width="212.9" height="21.35" fill="#a2deff"/>
<text x="1363.3" y="1281.55" font-size="15.4" fill="#121212" letter-spacing="0.74">__traceiter_sched...</text>
<rect x="1573.4" y="1265.45" width="5" height="21.35" fill="#a2deff"/>
<rect x="1359.2" y="1287.95" width="212.9" height="21.35" fill="#a2deff"/>
<text x="1363.3" y="1304.05" font-size="15.4" fill="#121212" letter-spacing="0.74">__traceiter_sched...</text>
<rect x="1579.6" y="770.45" width="44.8" height="21.35" fill="#fecc82"/>
<rect x="1625.6" y="770.45" width="7.5" height="21.35" fill="#fecc82"/>
<rect x="1579.6" y="792.95" width="38.5" height="21.35" fill="#fecc82"/>
<rect x="1579.6" y="815.45" width="38.5" height="21.35" fill="#fecc82"/>
<rect x="1579.6" y="837.95" width="38.5" height="21.35" fill="#fecc82"/>
<rect x="1579.6" y="860.45" width="38.5" height="21.35" fill="#a2deff"/>
<rect x="1579.6" y="882.95" width="38.5" height="21.35" fill="#fecc82"/>
<rect x="1579.6" y="905.45" width="38.5" height="21.35" fill="#fecc82"/>
<rect x="1579.6" y="927.95" width="38.5" height="21.35" fill="#a2deff"/>
<rect x="1579.6" y="950.45" width="38.5" height="21.35" fill="#fecc82"/>
<rect x="1579.6" y="972.95" width="38.5" height="21.35" fill="#fecc82"/>
<rect x="1579.6" y="995.45" width="38.5" height="21.35" fill="#a2deff"/>
<rect x="1579.6" y="1017.95" width="38.5" height="21.35" fill="#fecc82"/>
<rect x="1579.6" y="1040.45" width="38.5" height="21.35" fill="#fecc82"/>
<rect x="1579.6" y="1062.95" width="38.5" height="21.35" fill="#a2deff"/>
<rect x="1579.6" y="1085.45" width="38.5" height="21.35" fill="#fecc82"/>
<rect x="1579.6" y="1107.95" width="38.5" height="21.35" fill="#fecc82"/>
<rect x="1579.6" y="1130.45" width="38.5" height="21.35" fill="#a2deff"/>
<rect x="1579.6" y="1152.95" width="38.5" height="21.35" fill="#fecc82"/>
<rect x="1579.6" y="1175.45" width="38.5" height="21.35" fill="#fecc82"/>
<rect x="1579.6" y="1197.95" width="38.5" height="21.35" fill="#a2deff"/>
<rect x="1579.6" y="1220.45" width="38.5" height="21.35" fill="#fecc82"/>
<rect x="1579.6" y="1242.95" width="38.5" height="21.35" fill="#fecc82"/>
<rect x="1579.6" y="1265.45" width="38.5" height="21.35" fill="#a2deff"/>
<rect x="1579.6" y="1287.95" width="38.5" height="21.35" fill="#fecc82"/>
<rect x="1579.6" y="1310.45" width="38.5" height="21.35" fill="#fecc82"/>
<rect x="1579.6" y="1332.95" width="38.5" height="21.35" fill="#a2deff"/>
<rect x="1619.4" y="792.95" width="4.9" height="21.35" fill="#a2deff"/>
<rect x="1619.4" y="815.45" width="4.9" height="21.35" fill="#a2deff"/>
<rect x="1619.4" y="837.95" width="4.9" height="21.35" fill="#a2deff"/>
<rect x="1619.4" y="860.45" width="4.9" height="21.35" fill="#a2deff"/>
<rect x="1619.4" y="882.95" width="4.9" height="21.35" fill="#a2deff"/>
<rect x="1619.4" y="905.45" width="4.9" height="21.35" fill="#a2deff"/>
<rect x="1619.4" y="927.95" width="4.9" height="21.35" fill="#a2deff"/>
<rect x="1619.4" y="950.45" width="4.9" height="21.35" fill="#a2deff"/>
<rect x="1619.4" y="972.95" width="4.9" height="21.35" fill="#a2deff"/>
<rect x="1619.4" y="995.45" width="4.9" height="21.35" fill="#a2deff"/>
<rect x="1619.4" y="1017.95" width="4.9" height="21.35" fill="#a2deff"/>
<rect x="1619.4" y="1040.45" width="4.9" height="21.35" fill="#a2deff"/>
<rect x="1619.4" y="1062.95" width="4.9" height="21.35" fill="#a2deff"/>
<rect x="1619.4" y="1085.45" width="4.9" height="21.35" fill="#a2deff"/>
<rect x="1619.4" y="1107.95" width="4.9" height="21.35" fill="#a2deff"/>
<rect x="1619.4" y="1130.45" width="4.9" height="21.35" fill="#a2deff"/>
<rect x="1619.4" y="1152.95" width="4.9" height="21.35" fill="#a2deff"/>
<rect x="1619.4" y="1175.45" width="4.9" height="21.35" fill="#a2deff"/>
<rect x="1619.4" y="1197.95" width="4.9" height="21.35" fill="#a2deff"/>
<rect x="1619.4" y="1220.45" width="4.9" height="21.35" fill="#a2deff"/>
<rect x="1619.4" y="1242.95" width="4.9" height="21.35" fill="#a2deff"/>
<rect x="1619.4" y="1265.45" width="4.9" height="21.35" fill="#a2deff"/>
<rect x="1619.4" y="1287.95" width="4.9" height="21.35" fill="#a2deff"/>
<rect x="1619.4" y="1310.45" width="4.9" height="21.35" fill="#a2deff"/>
<rect x="1619.4" y="1332.95" width="4.9" height="21.35" fill="#a2deff"/>
<rect x="1625.6" y="792.95" width="7.5" height="21.35" fill="#a2deff"/>
<rect x="1625.6" y="815.45" width="7.5" height="21.35" fill="#fecc82"/>
<rect x="1625.6" y="837.95" width="7.5" height="21.35" fill="#a2deff"/>
<rect x="1625.6" y="860.45" width="7.5" height="21.35" fill="#a2deff"/>
<rect x="1625.6" y="882.95" width="2.4" height="21.35" fill="#a2deff"/>
<rect x="1625.6" y="905.45" width="2.4" height="21.35" fill="#a2deff"/>
<rect x="1629.2" y="882.95" width="3.9" height="21.35" fill="#fecc82"/>
<rect x="1629.2" y="905.45" width="3.9" height="21.35" fill="#fecc82"/>
<rect x="1625.5" y="927.95" width="2.5" height="21.35" fill="#a2deff"/>
<rect x="1625.5" y="950.45" width="2.5" height="21.35" fill="#a2deff"/>
<rect x="1625.5" y="972.95" width="2.5" height="21.35" fill="#a2deff"/>
<rect x="1625.5" y="995.45" width="2.5" height="21.35" fill="#a2deff"/>
<rect x="1625.5" y="1017.95" width="2.5" height="21.35" fill="#a2deff"/>
<rect x="1625.5" y="1040.45" width="2.5" height="21.35" fill="#a2deff"/>
<rect x="1625.5" y="1062.95" width="2.5" height="21.35" fill="#a2deff"/>
<rect x="1625.5" y="1085.45" width="2.5" height="21.35" fill="#9feaad"/>
<rect x="1625.5" y="1107.95" width="2.5" height="21.35" fill="#9feaad"/>
<rect x="1625.5" y="1130.45" width="2.5" height="21.35" fill="#a2deff"/>
<rect x="1625.5" y="1152.95" width="2.5" height="21.35" fill="#a2deff"/>
<rect x="1625.5" y="1175.45" width="2.5" height="21.35" fill="#a2deff"/>
<rect x="1625.5" y="1197.95" width="2.5" height="21.35" fill="#a2deff"/>
<rect x="1625.5" y="1220.45" width="2.5" height="21.35" fill="#a2deff"/>
<rect x="1625.5" y="1242.95" width="2.5" height="21.35" fill="#a2deff"/>
<rect x="1625.5" y="1265.45" width="2.5" height="21.35" fill="#a2deff"/>
<rect x="1629.2" y="927.95" width="2" height="21.35" fill="#a2deff"/>
<rect x="1629.2" y="950.45" width="2" height="21.35" fill="#a2deff"/>
<rect x="1629.2" y="972.95" width="2" height="21.35" fill="#a2deff"/>
<rect x="1629.2" y="995.45" width="2" height="21.35" fill="#a2deff"/>
<rect x="1629.2" y="1017.95" width="2" height="21.35" fill="#a2deff"/>
<rect x="1629.2" y="1040.45" width="2" height="21.35" fill="#a2deff"/>
<rect x="1629.2" y="1062.95" width="2" height="21.35" fill="#a2deff"/>
<rect x="1629.2" y="1085.45" width="2" height="21.35" fill="#a2deff"/>
<rect x="1629.2" y="1107.95" width="2" height="21.35" fill="#a2deff"/>
<rect x="1629.2" y="1130.45" width="2" height="21.35" fill="#a2deff"/>
<rect x="1629.2" y="1152.95" width="2" height="21.35" fill="#a2deff"/>
<rect x="1629.2" y="1175.45" width="2" height="21.35" fill="#a2deff"/>
<rect x="1629.2" y="1197.95" width="2" height="21.35" fill="#a2deff"/>
<rect x="1629.2" y="1220.45" width="2" height="21.35" fill="#a2deff"/>
<rect x="1629.2" y="1242.95" width="2" height="21.35" fill="#a2deff"/>
<rect x="1629.2" y="1265.45" width="2" height="21.35" fill="#a2deff"/>
<rect x="1634.5" y="770.45" width="40.6" height="21.35" fill="#a2deff"/>
<rect x="1634.5" y="792.95" width="40.6" height="21.35" fill="#a2deff"/>
<rect x="1634.5" y="815.45" width="40.6" height="21.35" fill="#a2deff"/>
<rect x="1634.5" y="837.95" width="40.6" height="21.35" fill="#a2deff"/>
<rect x="1634.5" y="860.45" width="40.6" height="21.35" fill="#a2deff"/>
<rect x="1634.5" y="882.95" width="40.6" height="21.35" fill="#a2deff"/>
<rect x="1634.5" y="905.45" width="40.6" height="21.35" fill="#a2deff"/>
<rect x="1634.5" y="927.95" width="40.6" height="21.35" fill="#a2deff"/>
<rect x="1634.5" y="950.45" width="40.6" height="21.35" fill="#a2deff"/>
<rect x="1634.5" y="972.95" width="40.6" height="21.35" fill="#a2deff"/>
<rect x="1677.2" y="770.45" width="3.3" height="21.35" fill="#a2deff"/>
<rect x="1677.2" y="792.95" width="3.3" height="21.35" fill="#a2deff"/>
<rect x="1677.2" y="815.45" width="3.3" height="21.35" fill="#a2deff"/>
<rect x="1677.2" y="837.95" width="3.3" height="21.35" fill="#a2deff"/>
<rect x="1677.2" y="860.45" width="3.3" height="21.35" fill="#a2deff"/>
<rect x="1677.2" y="882.95" width="3.3" height="21.35" fill="#a2deff"/>
<rect x="1677.2" y="905.45" width="3.3" height="21.35" fill="#a2deff"/>
<rect x="1677.2" y="927.95" width="3.3" height="21.35" fill="#a2deff"/>
<rect x="1677.2" y="950.45" width="3.3" height="21.35" fill="#a2deff"/>
<rect x="1677.2" y="972.95" width="3.3" height="21.35" fill="#a2deff"/>
<rect x="1677.2" y="995.45" width="3.3" height="21.35" fill="#a2deff"/>
<rect x="1677.2" y="1017.95" width="3.3" height="21.35" fill="#a2deff"/>
<rect x="1677.2" y="1040.45" width="3.3" height="21.35" fill="#a2deff"/>
<rect x="1677.2" y="1062.95" width="3.3" height="21.35" fill="#a2deff"/>
<rect x="1681.6" y="770.45" width="48.5" height="21.35" fill="#fecc82"/>
<text x="1685.7" y="786.55" font-size="15.4" fill="#121212" letter-spacing="0.74">draw</text>
<rect x="1731.6" y="770.45" width="31.5" height="21.35" fill="#fecc82"/>
<rect x="1681.6" y="792.95" width="9.1" height="21.35" fill="#fecc82"/>
<rect x="1681.6" y="815.45" width="9.1" height="21.35" fill="#fecc82"/>
<rect x="1681.6" y="837.95" width="9.1" height="21.35" fill="#fecc82"/>
<rect x="1681.6" y="860.45" width="9.1" height="21.35" fill="#a2deff"/>
<rect x="1681.6" y="882.95" width="9.1" height="21.35" fill="#fecc82"/>
<rect x="1681.6" y="905.45" width="9.1" height="21.35" fill="#fecc82"/>
<rect x="1681.6" y="927.95" width="9.1" height="21.35" fill="#a2deff"/>
<rect x="1681.6" y="950.45" width="9.1" height="21.35" fill="#fecc82"/>
<rect x="1681.6" y="972.95" width="9.1" height="21.35" fill="#fecc82"/>
<rect x="1681.6" y="995.45" width="9.1" height="21.35" fill="#a2deff"/>
<rect x="1681.6" y="1017.95" width="9.1" height="21.35" fill="#fecc82"/>
<rect x="1681.6" y="1040.45" width="9.1" height="21.35" fill="#fecc82"/>
<rect x="1681.6" y="1062.95" width="9.1" height="21.35" fill="#a2deff"/>
<rect x="1681.6" y="1085.45" width="9.1" height="21.35" fill="#fecc82"/>
<rect x="1681.6" y="1107.95" width="9.1" height="21.35" fill="#fecc82"/>
<rect x="1681.6" y="1130.45" width="9.1" height="21.35" fill="#a2deff"/>
<rect x="1681.6" y="1152.95" width="9.1" height="21.35" fill="#fecc82"/>
<rect x="1681.6" y="1175.45" width="9.1" height="21.35" fill="#fecc82"/>
<rect x="1681.6" y="1197.95" width="9.1" height="21.35" fill="#a2deff"/>
<rect x="1681.6" y="1220.45" width="9.1" height="21.35" fill="#fecc82"/>
<rect x="1681.6" y="1242.95" width="9.1" height="21.35" fill="#fecc82"/>
<rect x="1681.6" y="1265.45" width="9.1" height="21.35" fill="#a2deff"/>
<rect x="1681.6" y="1287.95" width="9.1" height="21.35" fill="#fecc82"/>
<rect x="1681.6" y="1310.45" width="9.1" height="21.35" fill="#fecc82"/>
<rect x="1681.6" y="1332.95" width="9.1" height="21.35" fill="#a2deff"/>
<rect x="1692" y="792.95" width="38.1" height="21.35" fill="#a2deff"/>
<rect x="1692" y="815.45" width="38.1" height="21.35" fill="#a2deff"/>
<rect x="1692" y="837.95" width="38.1" height="21.35" fill="#a2deff"/>
<rect x="1692" y="860.45" width="38.1" height="21.35" fill="#a2deff"/>
<rect x="1692" y="882.95" width="38.1" height="21.35" fill="#a2deff"/>
<rect x="1692" y="905.45" width="38.1" height="21.35" fill="#a2deff"/>
<rect x="1692" y="927.95" width="38.1" height="21.35" fill="#a2deff"/>
<rect x="1692" y="950.45" width="38.1" height="21.35" fill="#a2deff"/>
<rect x="1692" y="972.95" width="38.1" height="21.35" fill="#a2deff"/>
<rect x="1692" y="995.45" width="38.1" height="21.35" fill="#a2deff"/>
<rect x="1692" y="1017.95" width="38.1" height="21.35" fill="#a2deff"/>
<rect x="1692" y="1040.45" width="38.1" height="21.35" fill="#a2deff"/>
<rect x="1692" y="1062.95" width="38.1" height="21.35" fill="#a2deff"/>
<rect x="1692" y="1085.45" width="38.1" height="21.35" fill="#a2deff"/>
<rect x="1692" y="1107.95" width="38.1" height="21.35" fill="#a2deff"/>
<rect x="1692" y="1130.45" width="38.1" height="21.35" fill="#a2deff"/>
<rect x="1692" y="1152.95" width="38.1" height="21.35" fill="#a2deff"/>
<rect x="1692" y="1175.45" width="38.1" height="21.35" fill="#a2deff"/>
<rect x="1692" y="1197.95" width="38.1" height="21.35" fill="#a2deff"/>
<rect x="1692" y="1220.45" width="38.1" height="21.35" fill="#a2deff"/>
<rect x="1692" y="1242.95" width="38.1" height="21.35" fill="#a2deff"/>
<rect x="1692" y="1265.45" width="38.1" height="21.35" fill="#9feaad"/>
<rect x="1692" y="1287.95" width="38.1" height="21.35" fill="#9feaad"/>
<rect x="1692.4" y="1310.45" width="20.9" height="21.35" fill="#a2deff"/>
<rect x="1692.4" y="1332.95" width="20.9" height="21.35" fill="#a2deff"/>
<rect x="1714.7" y="1310.45" width="2.3" height="21.35" fill="#a2deff"/>
<rect x="1714.7" y="1332.95" width="2.3" height="21.35" fill="#a2deff"/>
<rect x="1731.6" y="792.95" width="31.5" height="21.35" fill="#a2deff"/>
<rect x="1731.6" y="815.45" width="31.5" height="21.35" fill="#fecc82"/>
<rect x="1731.6" y="837.95" width="31.5" height="21.35" fill="#a2deff"/>
<rect x="1731.6" y="860.45" width="31.5" height="21.35" fill="#a2deff"/>
<rect x="1731.6" y="882.95" width="11.5" height="21.35" fill="#a2deff"/>
<rect x="1731.6" y="905.45" width="11.5" height="21.35" fill="#a2deff"/>
<rect x="1731.6" y="927.95" width="11.5" height="21.35" fill="#a2deff"/>
<rect x="1731.6" y="950.45" width="11.5" height="21.35" fill="#a2deff"/>
<rect x="1731.6" y="972.95" width="11.5" height="21.35" fill="#a2deff"/>
<rect x="1731.6" y="995.45" width="11.5" height="21.35" fill="#a2deff"/>
<rect x="1731.6" y="1017.95" width="11.5" height="21.35" fill="#a2deff"/>
<rect x="1731.6" y="1040.45" width="11.5" height="21.35" fill="#a2deff"/>
<rect x="1731.6" y="1062.95" width="5.5" height="21.35" fill="#a2deff"/>
<rect x="1731.6" y="1085.45" width="5.5" height="21.35" fill="#9feaad"/>
<rect x="1731.6" y="1107.95" width="5.5" height="21.35" fill="#9feaad"/>
<rect x="1738.4" y="1062.95" width="5" height="21.35" fill="#a2deff"/>
<rect x="1738.4" y="1085.45" width="5" height="21.35" fill="#a2deff"/>
<rect x="1738.4" y="1107.95" width="5" height="21.35" fill="#a2deff"/>
<rect x="1738.4" y="1130.45" width="5" height="21.35" fill="#a2deff"/>
<rect x="1738.4" y="1152.95" width="5" height="21.35" fill="#a2deff"/>
<rect x="1738.4" y="1175.45" width="5" height="21.35" fill="#a2deff"/>
<rect x="1738.4" y="1197.95" width="5" height="21.35" fill="#a2deff"/>
<rect x="1738.4" y="1220.45" width="1.6" height="21.35" fill="#a2deff"/>
<rect x="1738.4" y="1242.95" width="1.6" height="21.35" fill="#a2deff"/>
<rect x="1741" y="1220.45" width="2.3" height="21.35" fill="#a2deff"/>
<rect x="1744.7" y="882.95" width="6" height="21.35" fill="#fecc82"/>
<rect x="1744.7" y="905.45" width="6" height="21.35" fill="#fecc82"/>
<rect x="1744.7" y="927.95" width="6" height="21.35" fill="#fecc82"/>
<rect x="1744.7" y="950.45" width="6" height="21.35" fill="#fecc82"/>
<rect x="1744.7" y="972.95" width="6" height="21.35" fill="#fecc82"/>
<rect x="1744.7" y="995.45" width="6" height="21.35" fill="#fecc82"/>
<rect x="1744.7" y="1017.95" width="6" height="21.35" fill="#fecc82"/>
<rect x="1744.7" y="1040.45" width="2.2" height="21.35" fill="#a2deff"/>
<rect x="1744.7" y="1062.95" width="2.2" height="21.35" fill="#a2deff"/>
<rect x="1744.7" y="1085.45" width="2.2" height="21.35" fill="#a2deff"/>
<rect x="1744.7" y="1107.95" width="2.2" height="21.35" fill="#a2deff"/>
<rect x="1744.7" y="1130.45" width="2.2" height="21.35" fill="#a2deff"/>
<rect x="1744.7" y="1152.95" width="2.2" height="21.35" fill="#a2deff"/>
<rect x="1744.7" y="1175.45" width="2.2" height="21.35" fill="#a2deff"/>
<rect x="1744.7" y="1197.95" width="2.2" height="21.35" fill="#a2deff"/>
<rect x="1744.7" y="1220.45" width="2.2" height="21.35" fill="#a2deff"/>
<rect x="1744.7" y="1242.95" width="2.2" height="21.35" fill="#a2deff"/>
<rect x="1744.7" y="1265.45" width="2.2" height="21.35" fill="#a2deff"/>
<rect x="1744.7" y="1287.95" width="2.2" height="21.35" fill="#a2deff"/>
<rect x="1744.7" y="1310.45" width="2.2" height="21.35" fill="#a2deff"/>
<rect x="1744.7" y="1332.95" width="2.2" height="21.35" fill="#a2deff"/>
<rect x="1748" y="1040.45" width="2.6" height="21.35" fill="#fecc82"/>
<rect x="1748" y="1062.95" width="2.6" height="21.35" fill="#fecc82"/>
<rect x="1748" y="1085.45" width="2.6" height="21.35" fill="#fecc82"/>
<rect x="1748" y="1107.95" width="2.6" height="21.35" fill="#fecc82"/>
<rect x="1748" y="1130.45" width="1" height="21.35" fill="#a2deff"/>
<rect x="1748" y="1152.95" width="1" height="21.35" fill="#a2deff"/>
<rect x="1748" y="1175.45" width="1" height="21.35" fill="#a2deff"/>
<rect x="1748" y="1197.95" width="1" height="21.35" fill="#a2deff"/>
<rect x="1748" y="1220.45" width="1" height="21.35" fill="#a2deff"/>
<rect x="1748" y="1242.95" width="1" height="21.35" fill="#a2deff"/>
<rect x="1748" y="1265.45" width="1" height="21.35" fill="#a2deff"/>
<rect x="1748" y="1287.95" width="1" height="21.35" fill="#a2deff"/>
<rect x="1748" y="1310.45" width="1" height="21.35" fill="#a2deff"/>
<rect x="1748" y="1332.95" width="1" height="21.35" fill="#a2deff"/>
<rect x="1749.8" y="1130.45" width="0.8" height="21.35" fill="#a2deff"/>
<rect x="1749.8" y="1152.95" width="0.8" height="21.35" fill="#a2deff"/>
<rect x="1749.8" y="1175.45" width="0.8" height="21.35" fill="#a2deff"/>
<rect x="1749.8" y="1197.95" width="0.8" height="21.35" fill="#a2deff"/>
<rect x="1749.8" y="1220.45" width="0.8" height="21.35" fill="#a2deff"/>
<rect x="1749.8" y="1242.95" width="0.8" height="21.35" fill="#a2deff"/>
<rect x="1749.8" y="1265.45" width="0.8" height="21.35" fill="#a2deff"/>
<rect x="1749.8" y="1287.95" width="0.8" height="21.35" fill="#a2deff"/>
<rect x="1749.8" y="1310.45" width="0.8" height="21.35" fill="#a2deff"/>
<rect x="1749.8" y="1332.95" width="0.8" height="21.35" fill="#a2deff"/>
<rect x="1752" y="882.95" width="11.1" height="21.35" fill="#fecc82"/>
<rect x="1752" y="905.45" width="11.1" height="21.35" fill="#fecc82"/>
<rect x="1752" y="927.95" width="11.1" height="21.35" fill="#fecc82"/>
<rect x="1752" y="950.45" width="11.1" height="21.35" fill="#fecc82"/>
<rect x="1751.8" y="972.95" width="2" height="21.35" fill="#a2deff"/>
<rect x="1751.8" y="995.45" width="2" height="21.35" fill="#a2deff"/>
<rect x="1751.8" y="1017.95" width="2" height="21.35" fill="#a2deff"/>
<rect x="1751.8" y="1040.45" width="2" height="21.35" fill="#a2deff"/>
<rect x="1751.8" y="1062.95" width="2" height="21.35" fill="#a2deff"/>
<rect x="1751.8" y="1085.45" width="2" height="21.35" fill="#a2deff"/>
<rect x="1751.8" y="1107.95" width="2" height="21.35" fill="#a2deff"/>
<rect x="1751.8" y="1130.45" width="2" height="21.35" fill="#a2deff"/>
<rect x="1751.8" y="1152.95" width="2" height="21.35" fill="#a2deff"/>
<rect x="1751.8" y="1175.45" width="2" height="21.35" fill="#a2deff"/>
<rect x="1751.8" y="1197.95" width="2" height="21.35" fill="#a2deff"/>
<rect x="1751.8" y="1220.45" width="2" height="21.35" fill="#a2deff"/>
<rect x="1751.8" y="1242.95" width="2" height="21.35" fill="#a2deff"/>
<rect x="1755" y="972.95" width="5.1" height="21.35" fill="#a2deff"/>
<rect x="1755" y="995.45" width="5.1" height="21.35" fill="#a2deff"/>
<rect x="1755" y="1017.95" width="5.1" height="21.35" fill="#a2deff"/>
<rect x="1755" y="1040.45" width="5.1" height="21.35" fill="#a2deff"/>
<rect x="1755" y="1062.95" width="5.1" height="21.35" fill="#a2deff"/>
<rect x="1755" y="1085.45" width="5.1" height="21.35" fill="#a2deff"/>
<rect x="1755" y="1107.95" width="5.1" height="21.35" fill="#a2deff"/>
<rect x="1755" y="1130.45" width="5.1" height="21.35" fill="#a2deff"/>
<rect x="1755" y="1152.95" width="5.1" height="21.35" fill="#a2deff"/>
<rect x="1755" y="1175.45" width="5.1" height="21.35" fill="#a2deff"/>
<rect x="1755" y="1197.95" width="5.1" height="21.35" fill="#a2deff"/>
<rect x="1755" y="1220.45" width="5.1" height="21.35" fill="#a2deff"/>
<rect x="1755" y="1242.95" width="5.1" height="21.35" fill="#a2deff"/>
<rect x="1755" y="1265.45" width="5.1" height="21.35" fill="#a2deff"/>
<rect x="1755" y="1287.95" width="5.1" height="21.35" fill="#a2deff"/>
<rect x="1755" y="1310.45" width="5.1" height="21.35" fill="#a2deff"/>
<rect x="1755" y="1332.95" width="5.1" height="21.35" fill="#a2deff"/>
<rect x="1760.9" y="972.95" width="2.1" height="21.35" fill="#a2deff"/>
<rect x="1760.9" y="995.45" width="2.1" height="21.35" fill="#a2deff"/>
<rect x="1760.9" y="1017.95" width="2.1" height="21.35" fill="#a2deff"/>
<rect x="1760.9" y="1040.45" width="2.1" height="21.35" fill="#a2deff"/>
<rect x="1760.9" y="1062.95" width="2.1" height="21.35" fill="#a2deff"/>
<rect x="1760.9" y="1085.45" width="2.1" height="21.35" fill="#a2deff"/>
<rect x="1760.9" y="1107.95" width="2.1" height="21.35" fill="#a2deff"/>
<rect x="1760.9" y="1130.45" width="2.1" height="21.35" fill="#a2deff"/>
<rect x="1760.9" y="1152.95" width="2.1" height="21.35" fill="#a2deff"/>
<rect x="1760.9" y="1175.45" width="2.1" height="21.35" fill="#a2deff"/>
<rect x="1760.9" y="1197.95" width="2.1" height="21.35" fill="#a2deff"/>
<rect x="1760.9" y="1220.45" width="2.1" height="21.35" fill="#a2deff"/>
<rect x="1764.5" y="770.45" width="19.6" height="21.35" fill="#a2deff"/>
<rect x="1764.5" y="792.95" width="19.6" height="21.35" fill="#a2deff"/>
<rect x="1764.5" y="815.45" width="19.6" height="21.35" fill="#a2deff"/>
<rect x="1764.5" y="837.95" width="19.6" height="21.35" fill="#a2deff"/>
<rect x="1764.5" y="860.45" width="19.6" height="21.35" fill="#a2deff"/>
<rect x="1764.5" y="882.95" width="19.6" height="21.35" fill="#a2deff"/>
<rect x="1764.5" y="905.45" width="19.6" height="21.35" fill="#a2deff"/>
<rect x="1764.5" y="927.95" width="19.6" height="21.35" fill="#a2deff"/>
<rect x="1764.5" y="950.45" width="19.6" height="21.35" fill="#a2deff"/>
<rect x="1764.5" y="972.95" width="19.6" height="21.35" fill="#a2deff"/>
<rect x="1764.5" y="995.45" width="19.6" height="21.35" fill="#a2deff"/>
<rect x="1764.5" y="1017.95" width="19.6" height="21.35" fill="#a2deff"/>
<rect x="1764.5" y="1040.45" width="19.6" height="21.35" fill="#a2deff"/>
<rect x="1764.5" y="1062.95" width="19.6" height="21.35" fill="#a2deff"/>
<rect x="1785.5" y="770.45" width="5.6" height="21.35" fill="#fecc82"/>
<rect x="1785.5" y="792.95" width="5.6" height="21.35" fill="#a2deff"/>
<rect x="1785.5" y="815.45" width="5.6" height="21.35" fill="#a2deff"/>
<rect x="1785.5" y="837.95" width="5.6" height="21.35" fill="#a2deff"/>
<rect x="1785.5" y="860.45" width="0.9" height="21.35" fill="#a2deff"/>
<rect x="1785.5" y="882.95" width="0.9" height="21.35" fill="#a2deff"/>
<rect x="1785.5" y="905.45" width="0.9" height="21.35" fill="#a2deff"/>
<rect x="1785.5" y="927.95" width="0.9" height="21.35" fill="#a2deff"/>
<rect x="1785.5" y="950.45" width="0.9" height="21.35" fill="#a2deff"/>
<rect x="1785.5" y="972.95" width="0.9" height="21.35" fill="#a2deff"/>
<rect x="1785.5" y="995.45" width="0.9" height="21.35" fill="#a2deff"/>
<rect x="1785.5" y="1017.95" width="0.9" height="21.35" fill="#a2deff"/>
<rect x="1785.5" y="1040.45" width="0.9" height="21.35" fill="#a2deff"/>
<rect x="1785.5" y="1062.95" width="0.9" height="21.35" fill="#a2deff"/>
<rect x="1785.5" y="1085.45" width="0.9" height="21.35" fill="#a2deff"/>
<rect x="1785.5" y="1107.95" width="0.9" height="21.35" fill="#a2deff"/>
<rect x="1785.5" y="1130.45" width="0.9" height="21.35" fill="#a2deff"/>
<rect x="1785.5" y="1152.95" width="0.9" height="21.35" fill="#a2deff"/>
<rect x="1785.5" y="1175.45" width="0.9" height="21.35" fill="#a2deff"/>
<rect x="1785.5" y="1197.95" width="0.9" height="21.35" fill="#a2deff"/>
<rect x="1785.5" y="1220.45" width="0.9" height="21.35" fill="#a2deff"/>
<rect x="1785.5" y="1242.95" width="0.9" height="21.35" fill="#a2deff"/>
<rect x="1785.5" y="1265.45" width="0.9" height="21.35" fill="#a2deff"/>
<rect x="1785.5" y="1287.95" width="0.9" height="21.35" fill="#a2deff"/>
<rect x="1785.5" y="1310.45" width="0.9" height="21.35" fill="#a2deff"/>
<rect x="1785.5" y="1332.95" width="0.9" height="21.35" fill="#a2deff"/>
<rect x="1792.6" y="770.45" width="182.8" height="21.35" fill="#fecc82"/>
<text x="1796.7" y="786.55" font-size="15.4" fill="#121212" letter-spacing="0.74">swapBuffers</text>
<rect x="1792.6" y="792.95" width="182.8" height="21.35" fill="#a2deff"/>
<text x="1796.7" y="809.05" font-size="15.4" fill="#121212" letter-spacing="0.74">eglSwapBuffers...</text>
<rect x="1792.6" y="815.45" width="182.8" height="21.35" fill="#fecc82"/>
<text x="1796.7" y="831.55" font-size="15.4" fill="#121212" letter-spacing="0.74">eglSwapBuffers...</text>
<rect x="1792.6" y="837.95" width="182.8" height="21.35" fill="#a2deff"/>
<text x="1796.7" y="854.05" font-size="15.4" fill="#121212" letter-spacing="0.74">eglSwapBuffers</text>
<rect x="1792.6" y="860.45" width="182.8" height="21.35" fill="#a2deff"/>
<text x="1796.7" y="876.55" font-size="15.4" fill="#121212" letter-spacing="0.74">e::swapBuffers</text>
<rect x="1792.6" y="882.95" width="182.8" height="21.35" fill="#fecc82"/>
<text x="1796.7" y="899.05" font-size="15.4" fill="#121212" letter-spacing="0.74">hook_dequeueBu...</text>
<rect x="1792.6" y="905.45" width="182.8" height="21.35" fill="#fecc82"/>
<text x="1796.7" y="921.55" font-size="15.4" fill="#121212" letter-spacing="0.74">hook_dequeueBu...</text>
<rect x="1792.6" y="927.95" width="182.8" height="21.35" fill="#fecc82"/>
<text x="1796.7" y="944.05" font-size="15.4" fill="#121212" letter-spacing="0.74">dequeueBuffer</text>
<rect x="1792.6" y="950.45" width="182.8" height="21.35" fill="#fecc82"/>
<text x="1796.7" y="966.55" font-size="15.4" fill="#121212" letter-spacing="0.74">dequeueBuffer</text>
<rect x="1792.6" y="972.95" width="181.1" height="21.35" fill="#a2deff"/>
<text x="1796.7" y="989.05" font-size="15.4" fill="#121212" letter-spacing="0.74">__do_timed_wait</text>
<rect x="1792.6" y="995.45" width="181.1" height="21.35" fill="#a2deff"/>
<text x="1796.7" y="1011.55" font-size="15.4" fill="#121212" letter-spacing="0.74">pthread_cond_t...</text>
<rect x="1792.6" y="1017.95" width="181.1" height="21.35" fill="#a2deff"/>
<text x="1796.7" y="1034.05" font-size="15.4" fill="#121212" letter-spacing="0.74">__futex_wait_ex</text>
<rect x="1792.6" y="1040.45" width="181.1" height="21.35" fill="#a2deff"/>
<text x="1796.7" y="1056.55" font-size="15.4" fill="#121212" letter-spacing="0.74">syscall</text>
<rect x="1792.6" y="1062.95" width="181.1" height="21.35" fill="#a2deff"/>
<text x="1796.7" y="1079.05" font-size="15.4" fill="#121212" letter-spacing="0.74">entry_SYSCALL_...</text>
<rect x="1792.6" y="1085.45" width="181.1" height="21.35" fill="#a2deff"/>
<text x="1796.7" y="1101.55" font-size="15.4" fill="#121212" letter-spacing="0.74">do_syscall_64</text>
<rect x="1792.6" y="1107.95" width="181.1" height="21.35" fill="#a2deff"/>
<text x="1796.7" y="1124.05" font-size="15.4" fill="#121212" letter-spacing="0.74">__x64_sys_futex</text>
<rect x="1792.6" y="1130.45" width="181.1" height="21.35" fill="#a2deff"/>
<text x="1796.7" y="1146.55" font-size="15.4" fill="#121212" letter-spacing="0.74">__se_sys_futex</text>
<rect x="1792.6" y="1152.95" width="181.1" height="21.35" fill="#a2deff"/>
<text x="1796.7" y="1169.05" font-size="15.4" fill="#121212" letter-spacing="0.74">do_futex</text>
<rect x="1792.6" y="1175.45" width="181.1" height="21.35" fill="#a2deff"/>
<text x="1796.7" y="1191.55" font-size="15.4" fill="#121212" letter-spacing="0.74">futex_wait</text>
<rect x="1792.6" y="1197.95" width="181.1" height="21.35" fill="#a2deff"/>
<text x="1796.7" y="1214.05" font-size="15.4" fill="#121212" letter-spacing="0.74">futex_wait_que...</text>
<rect x="1792.6" y="1220.45" width="181.1" height="21.35" fill="#a2deff"/>
<text x="1796.7" y="1236.55" font-size="15.4" fill="#121212" letter-spacing="0.74">schedule</text>
<rect x="1792.6" y="1242.95" width="181.1" height="21.35" fill="#a2deff"/>
<text x="1796.7" y="1259.05" font-size="15.4" fill="#121212" letter-spacing="0.74">__schedule</text>
<rect x="1792.6" y="1265.45" width="181.1" height="21.35" fill="#a2deff"/>
<text x="1796.7" y="1281.55" font-size="15.4" fill="#121212" letter-spacing="0.74">__traceiter_sc...</text>
<rect x="1792.6" y="1287.95" width="181.1" height="21.35" fill="#a2deff"/>
<text x="1796.7" y="1304.05" font-size="15.4" fill="#121212" letter-spacing="0.74">__traceiter_sc...</text>
<rect x="1974.6" y="972.95" width="1" height="21.35" fill="#a2deff"/>
<rect x="1974.6" y="995.45" width="1" height="21.35" fill="#a2deff"/>
<rect x="1974.6" y="1017.95" width="1" height="21.35" fill="#a2deff"/>
<rect x="1974.6" y="1040.45" width="1" height="21.35" fill="#a2deff"/>
<rect x="1974.6" y="1062.95" width="1" height="21.35" fill="#a2deff"/>
<rect x="1974.6" y="1085.45" width="1" height="21.35" fill="#a2deff"/>
<rect x="1974.6" y="1107.95" width="1" height="21.35" fill="#a2deff"/>
<rect x="1974.6" y="1130.45" width="1" height="21.35" fill="#a2deff"/>
<rect x="1974.6" y="1152.95" width="1" height="21.35" fill="#a2deff"/>
<rect x="1976.7" y="770.45" width="51.6" height="21.35" fill="#a2deff"/>
<text x="1980.8" y="786.55" font-size="15.4" fill="#121212" letter-spacing="0.74">c...</text>
<rect x="1976.7" y="792.95" width="51.6" height="21.35" fill="#a2deff"/>
<text x="1980.8" y="809.05" font-size="15.4" fill="#121212" letter-spacing="0.74">c...</text>
<rect x="1976.7" y="815.45" width="51.6" height="21.35" fill="#a2deff"/>
<text x="1980.8" y="831.55" font-size="15.4" fill="#121212" letter-spacing="0.74">e...</text>
<rect x="1976.7" y="837.95" width="51.6" height="21.35" fill="#a2deff"/>
<text x="1980.8" y="854.05" font-size="15.4" fill="#121212" letter-spacing="0.74">d...</text>
<rect x="1976.7" y="860.45" width="51.6" height="21.35" fill="#a2deff"/>
<text x="1980.8" y="876.55" font-size="15.4" fill="#121212" letter-spacing="0.74">_...</text>
<rect x="1976.7" y="882.95" width="51.6" height="21.35" fill="#a2deff"/>
<text x="1980.8" y="899.05" font-size="15.4" fill="#121212" letter-spacing="0.74">p...</text>
<rect x="1976.7" y="905.45" width="51.6" height="21.35" fill="#a2deff"/>
<text x="1980.8" y="921.55" font-size="15.4" fill="#121212" letter-spacing="0.74">k...</text>
<rect x="1976.7" y="927.95" width="51.6" height="21.35" fill="#a2deff"/>
<text x="1980.8" y="944.05" font-size="15.4" fill="#121212" letter-spacing="0.74">r...</text>
<rect x="1976.7" y="950.45" width="51.6" height="21.35" fill="#a2deff"/>
<text x="1980.8" y="966.55" font-size="15.4" fill="#121212" letter-spacing="0.74">a...</text>
<rect x="1976.7" y="972.95" width="51.6" height="21.35" fill="#a2deff"/>
<text x="1980.8" y="989.05" font-size="15.4" fill="#121212" letter-spacing="0.74">s...</text>
<rect x="1976.7" y="995.45" width="51.6" height="21.35" fill="#a2deff"/>
<text x="1980.8" y="1011.55" font-size="15.4" fill="#121212" letter-spacing="0.74">i...</text>
<rect x="1976.7" y="1017.95" width="51.6" height="21.35" fill="#a2deff"/>
<text x="1980.8" y="1034.05" font-size="15.4" fill="#121212" letter-spacing="0.74">i...</text>
<rect x="1976.7" y="1040.45" width="51.6" height="21.35" fill="#a2deff"/>
<text x="1980.8" y="1056.55" font-size="15.4" fill="#121212" letter-spacing="0.74">_...</text>
<rect x="1976.7" y="1062.95" width="51.6" height="21.35" fill="#a2deff"/>
<text x="1980.8" y="1079.05" font-size="15.4" fill="#121212" letter-spacing="0.74">_...</text>
<rect x="1976.7" y="1085.45" width="51.6" height="21.35" fill="#a2deff"/>
<text x="1980.8" y="1101.55" font-size="15.4" fill="#121212" letter-spacing="0.74">_...</text>
<rect x="2029.4" y="635.45" width="2.2" height="21.35" fill="#a2deff"/>
<rect x="2029.4" y="657.95" width="2.2" height="21.35" fill="#a2deff"/>
<rect x="2033.6" y="635.45" width="330.4" height="21.35" fill="#a2deff"/>
<text x="2037.7" y="651.55" font-size="15.4" fill="#121212" letter-spacing="0.74">__start_thread</text>
<rect x="2033.6" y="657.95" width="330.4" height="21.35" fill="#a2deff"/>
<text x="2037.7" y="674.05" font-size="15.4" fill="#121212" letter-spacing="0.74">__pthread_start</text>
<rect x="2033.6" y="680.45" width="330.4" height="21.35" fill="#fecc82"/>
<text x="2037.7" y="696.55" font-size="15.4" fill="#121212" letter-spacing="0.74">android::Thread::_threadLoop</text>
<rect x="2033.6" y="702.95" width="330.4" height="21.35" fill="#fecc82"/>
<text x="2037.7" y="719.05" font-size="15.4" fill="#121212" letter-spacing="0.74">a::u::r::R::threadLoop</text>
<rect x="2033.6" y="725.45" width="330.4" height="21.35" fill="#a2deff"/>
<rect x="2033.6" y="747.95" width="330.4" height="21.35" fill="#fecc82"/>
<text x="2037.7" y="764.05" font-size="15.4" fill="#121212" letter-spacing="0.74">a::u::r::CanvasContext::draw</text>
<rect x="2033.6" y="770.45" width="16.7" height="21.35" fill="#fecc82"/>
<rect x="2033.6" y="792.95" width="16.7" height="21.35" fill="#a2deff"/>
<rect x="2033.6" y="815.45" width="16.7" height="21.35" fill="#fecc82"/>
<rect x="2033.6" y="837.95" width="16.7" height="21.35" fill="#a2deff"/>
<rect x="2033.6" y="860.45" width="16.7" height="21.35" fill="#a2deff"/>
<rect x="2033.6" y="882.95" width="2.2" height="21.35" fill="#fecc82"/>
<rect x="2033.6" y="905.45" width="2.2" height="21.35" fill="#fecc82"/>
<rect x="2033.6" y="927.95" width="2.2" height="21.35" fill="#fecc82"/>
<rect x="2033.6" y="950.45" width="2.2" height="21.35" fill="#fecc82"/>
<rect x="2033.6" y="972.95" width="2.2" height="21.35" fill="#a2deff"/>
<rect x="2033.6" y="995.45" width="2.2" height="21.35" fill="#a2deff"/>
<rect x="2033.6" y="1017.95" width="2.2" height="21.35" fill="#a2deff"/>
<rect x="2033.6" y="1040.45" width="2.2" height="21.35" fill="#a2deff"/>
<rect x="2033.6" y="1062.95" width="2.2" height="21.35" fill="#a2deff"/>
<rect x="2033.6" y="1085.45" width="2.2" height="21.35" fill="#a2deff"/>
<rect x="2033.6" y="1107.95" width="2.2" height="21.35" fill="#a2deff"/>
<rect x="2037" y="882.95" width="13.3" height="21.35" fill="#fecc82"/>
<rect x="2037" y="905.45" width="13.3" height="21.35" fill="#fecc82"/>
<rect x="2037" y="927.95" width="13.3" height="21.35" fill="#fecc82"/>
<rect x="2037" y="950.45" width="13.3" height="21.35" fill="#fecc82"/>
<rect x="2037" y="972.95" width="8.3" height="21.35" fill="#a2deff"/>
<rect x="2037" y="995.45" width="8.3" height="21.35" fill="#a2deff"/>
<rect x="2037" y="1017.95" width="8.3" height="21.35" fill="#a2deff"/>
<rect x="2037" y="1040.45" width="8.3" height="21.35" fill="#a2deff"/>
<rect x="2037" y="1062.95" width="8.3" height="21.35" fill="#a2deff"/>
<rect x="2037" y="1085.45" width="8.3" height="21.35" fill="#a2deff"/>
<rect x="2037" y="1107.95" width="8.3" height="21.35" fill="#a2deff"/>
<rect x="2037" y="1130.45" width="8.3" height="21.35" fill="#a2deff"/>
<rect x="2037" y="1152.95" width="8.3" height="21.35" fill="#a2deff"/>
<rect x="2037" y="1175.45" width="8.3" height="21.35" fill="#a2deff"/>
<rect x="2037" y="1197.95" width="8.3" height="21.35" fill="#a2deff"/>
<rect x="2037" y="1220.45" width="8.3" height="21.35" fill="#a2deff"/>
<rect x="2037" y="1242.95" width="8.3" height="21.35" fill="#a2deff"/>
<rect x="2037" y="1265.45" width="8.3" height="21.35" fill="#a2deff"/>
<rect x="2037" y="1287.95" width="8.3" height="21.35" fill="#a2deff"/>
<rect x="2046.3" y="972.95" width="4" height="21.35" fill="#a2deff"/>
<rect x="2046.3" y="995.45" width="4" height="21.35" fill="#a2deff"/>
<rect x="2046.3" y="1017.95" width="4" height="21.35" fill="#a2deff"/>
<rect x="2046.3" y="1040.45" width="4" height="21.35" fill="#a2deff"/>
<rect x="2046.3" y="1062.95" width="4" height="21.35" fill="#a2deff"/>
<rect x="2046.3" y="1085.45" width="4" height="21.35" fill="#a2deff"/>
<rect x="2046.3" y="1107.95" width="4" height="21.35" fill="#a2deff"/>
<rect x="2046.3" y="1130.45" width="4" height="21.35" fill="#a2deff"/>
<rect x="2046.3" y="1152.95" width="4" height="21.35" fill="#a2deff"/>
<rect x="2041.6" y="972.95" width="0.9" height="202.5" fill="#5f7786"/>
<rect x="2051.6" y="770.45" width="35" height="21.35" fill="#fecc82"/>
<rect x="2051.6" y="792.95" width="19.1" height="21.35" fill="#fecc82"/>
<rect x="2051.6" y="815.45" width="19.1" height="21.35" fill="#fecc82"/>
<rect x="2051.6" y="837.95" width="19.1" height="21.35" fill="#fecc82"/>
<rect x="2051.6" y="860.45" width="19.1" height="21.35" fill="#a2deff"/>
<rect x="2051.6" y="882.95" width="19.1" height="21.35" fill="#fecc82"/>
<rect x="2051.6" y="905.45" width="19.1" height="21.35" fill="#fecc82"/>
<rect x="2051.6" y="927.95" width="19.1" height="21.35" fill="#a2deff"/>
<rect x="2051.6" y="950.45" width="19.1" height="21.35" fill="#fecc82"/>
<rect x="2051.6" y="972.95" width="19.1" height="21.35" fill="#fecc82"/>
<rect x="2051.6" y="995.45" width="19.1" height="21.35" fill="#a2deff"/>
<rect x="2051.6" y="1017.95" width="19.1" height="21.35" fill="#fecc82"/>
<rect x="2051.6" y="1040.45" width="19.1" height="21.35" fill="#fecc82"/>
<rect x="2051.6" y="1062.95" width="19.1" height="21.35" fill="#a2deff"/>
<rect x="2051.6" y="1085.45" width="19.1" height="21.35" fill="#fecc82"/>
<rect x="2051.6" y="1107.95" width="19.1" height="21.35" fill="#fecc82"/>
<rect x="2051.6" y="1130.45" width="19.1" height="21.35" fill="#a2deff"/>
<rect x="2051.6" y="1152.95" width="19.1" height="21.35" fill="#fecc82"/>
<rect x="2051.6" y="1175.45" width="19.1" height="21.35" fill="#fecc82"/>
<rect x="2051.6" y="1197.95" width="19.1" height="21.35" fill="#a2deff"/>
<rect x="2051.6" y="1220.45" width="19.1" height="21.35" fill="#fecc82"/>
<rect x="2051.6" y="1242.95" width="19.1" height="21.35" fill="#fecc82"/>
<rect x="2051.6" y="1265.45" width="19.1" height="21.35" fill="#a2deff"/>
<rect x="2051.6" y="1287.95" width="19.1" height="21.35" fill="#fecc82"/>
<rect x="2051.6" y="1310.45" width="19.1" height="21.35" fill="#fecc82"/>
<rect x="2051.6" y="1332.95" width="19.1" height="21.35" fill="#a2deff"/>
<rect x="2072" y="792.95" width="14.6" height="21.35" fill="#a2deff"/>
<rect x="2072" y="815.45" width="14.6" height="21.35" fill="#a2deff"/>
<rect x="2072" y="837.95" width="14.6" height="21.35" fill="#a2deff"/>
<rect x="2072" y="860.45" width="14.6" height="21.35" fill="#a2deff"/>
<rect x="2072" y="882.95" width="14.6" height="21.35" fill="#a2deff"/>
<rect x="2072" y="905.45" width="14.6" height="21.35" fill="#a2deff"/>
<rect x="2072" y="927.95" width="14.6" height="21.35" fill="#a2deff"/>
<rect x="2072" y="950.45" width="14.6" height="21.35" fill="#a2deff"/>
<rect x="2072" y="972.95" width="14.6" height="21.35" fill="#a2deff"/>
<rect x="2072" y="995.45" width="14.6" height="21.35" fill="#a2deff"/>
<rect x="2072" y="1017.95" width="14.6" height="21.35" fill="#a2deff"/>
<rect x="2072" y="1040.45" width="14.6" height="21.35" fill="#a2deff"/>
<rect x="2072" y="1062.95" width="14.6" height="21.35" fill="#a2deff"/>
<rect x="2072" y="1085.45" width="14.6" height="21.35" fill="#a2deff"/>
<rect x="2072" y="1107.95" width="14.6" height="21.35" fill="#a2deff"/>
<rect x="2072" y="1130.45" width="14.6" height="21.35" fill="#a2deff"/>
<rect x="2072" y="1152.95" width="14.6" height="21.35" fill="#a2deff"/>
<rect x="2072" y="1175.45" width="14.6" height="21.35" fill="#a2deff"/>
<rect x="2072" y="1197.95" width="14.6" height="21.35" fill="#a2deff"/>
<rect x="2072" y="1220.45" width="14.6" height="21.35" fill="#a2deff"/>
<rect x="2072" y="1242.95" width="14.6" height="21.35" fill="#a2deff"/>
<rect x="2072" y="1265.45" width="14.6" height="21.35" fill="#9feaad"/>
<rect x="2072" y="1287.95" width="14.6" height="21.35" fill="#9feaad"/>
<rect x="2087.6" y="882.95" width="1.8" height="21.35" fill="#a2deff"/>
<rect x="2087.6" y="905.45" width="1.8" height="21.35" fill="#a2deff"/>
<rect x="2087.6" y="927.95" width="1.8" height="21.35" fill="#a2deff"/>
<rect x="2087.6" y="950.45" width="1.8" height="21.35" fill="#a2deff"/>
<rect x="2087.6" y="972.95" width="1.8" height="21.35" fill="#a2deff"/>
<rect x="2087.6" y="995.45" width="1.8" height="21.35" fill="#a2deff"/>
<rect x="2087.6" y="1017.95" width="1.8" height="21.35" fill="#a2deff"/>
<rect x="2087.6" y="1040.45" width="1.8" height="21.35" fill="#a2deff"/>
<rect x="2087.6" y="1062.95" width="1.8" height="21.35" fill="#a2deff"/>
<rect x="2087.8" y="770.45" width="276.2" height="21.35" fill="#fecc82"/>
<text x="2091.9" y="786.55" font-size="15.4" fill="#121212" letter-spacing="0.74">a::u::s::S::swapBuffers</text>
<rect x="2087.8" y="792.95" width="276.2" height="21.35" fill="#a2deff"/>
<text x="2091.9" y="809.05" font-size="15.4" fill="#121212" letter-spacing="0.74">eglSwapBuffersWithDamag...</text>
<rect x="2087.8" y="815.45" width="276.2" height="21.35" fill="#fecc82"/>
<text x="2091.9" y="831.55" font-size="15.4" fill="#121212" letter-spacing="0.74">eglSwapBuffersWithDamag...</text>
<rect x="2087.8" y="837.95" width="276.2" height="21.35" fill="#a2deff"/>
<text x="2091.9" y="854.05" font-size="15.4" fill="#121212" letter-spacing="0.74">eglSwapBuffers</text>
<rect x="2087.8" y="860.45" width="276.2" height="21.35" fill="#a2deff"/>
<text x="2091.9" y="876.55" font-size="15.4" fill="#121212" letter-spacing="0.74">e::swapBuffers</text>
<rect x="2090.7" y="882.95" width="109.9" height="21.35" fill="#fecc82"/>
<text x="2094.8" y="899.05" font-size="15.4" fill="#121212" letter-spacing="0.74">hook_de...</text>
<rect x="2090.7" y="905.45" width="109.9" height="21.35" fill="#fecc82"/>
<text x="2094.8" y="921.55" font-size="15.4" fill="#121212" letter-spacing="0.74">hook_de...</text>
<rect x="2090.7" y="927.95" width="109.9" height="21.35" fill="#fecc82"/>
<text x="2094.8" y="944.05" font-size="15.4" fill="#121212" letter-spacing="0.74">dequeue...</text>
<rect x="2090.7" y="950.45" width="109.9" height="21.35" fill="#fecc82"/>
<text x="2094.8" y="966.55" font-size="15.4" fill="#121212" letter-spacing="0.74">dequeue...</text>
<rect x="2203.8" y="882.95" width="160.2" height="21.35" fill="#fecc82"/>
<text x="2207.9" y="899.05" font-size="15.4" fill="#121212" letter-spacing="0.74">hook_dequeue...</text>
<rect x="2203.8" y="905.45" width="160.2" height="21.35" fill="#fecc82"/>
<text x="2207.9" y="921.55" font-size="15.4" fill="#121212" letter-spacing="0.74">hook_dequeue...</text>
<rect x="2203.8" y="927.95" width="160.2" height="21.35" fill="#fecc82"/>
<text x="2207.9" y="944.05" font-size="15.4" fill="#121212" letter-spacing="0.74">dequeueBuffer</text>
<rect x="2203.8" y="950.45" width="160.2" height="21.35" fill="#fecc82"/>
<text x="2207.9" y="966.55" font-size="15.4" fill="#121212" letter-spacing="0.74">dequeueBuffer</text>
<rect x="2090.7" y="972.95" width="98.4" height="21.35" fill="#a2deff"/>
<text x="2094.8" y="989.05" font-size="15.4" fill="#121212" letter-spacing="0.74">__do_t...</text>
<rect x="2090.7" y="995.45" width="98.4" height="21.35" fill="#a2deff"/>
<text x="2094.8" y="1011.55" font-size="15.4" fill="#121212" letter-spacing="0.74">pthrea...</text>
<rect x="2090.7" y="1017.95" width="98.4" height="21.35" fill="#a2deff"/>
<text x="2094.8" y="1034.05" font-size="15.4" fill="#121212" letter-spacing="0.74">__fute...</text>
<rect x="2090.7" y="1040.45" width="98.4" height="21.35" fill="#a2deff"/>
<text x="2094.8" y="1056.55" font-size="15.4" fill="#121212" letter-spacing="0.74">syscall</text>
<rect x="2090.7" y="1062.95" width="98.4" height="21.35" fill="#a2deff"/>
<text x="2094.8" y="1079.05" font-size="15.4" fill="#121212" letter-spacing="0.74">entry_...</text>
<rect x="2090.7" y="1085.45" width="98.4" height="21.35" fill="#a2deff"/>
<text x="2094.8" y="1101.55" font-size="15.4" fill="#121212" letter-spacing="0.74">do_sys...</text>
<rect x="2090.7" y="1107.95" width="98.4" height="21.35" fill="#a2deff"/>
<text x="2094.8" y="1124.05" font-size="15.4" fill="#121212" letter-spacing="0.74">__x64_...</text>
<rect x="2090.7" y="1130.45" width="98.4" height="21.35" fill="#a2deff"/>
<text x="2094.8" y="1146.55" font-size="15.4" fill="#121212" letter-spacing="0.74">__se_s...</text>
<rect x="2090.7" y="1152.95" width="98.4" height="21.35" fill="#a2deff"/>
<text x="2094.8" y="1169.05" font-size="15.4" fill="#121212" letter-spacing="0.74">do_futex</text>
<rect x="2090.7" y="1175.45" width="98.4" height="21.35" fill="#a2deff"/>
<text x="2094.8" y="1191.55" font-size="15.4" fill="#121212" letter-spacing="0.74">futex_...</text>
<rect x="2090.7" y="1197.95" width="98.4" height="21.35" fill="#a2deff"/>
<text x="2094.8" y="1214.05" font-size="15.4" fill="#121212" letter-spacing="0.74">futex_...</text>
<rect x="2090.7" y="1220.45" width="98.4" height="21.35" fill="#a2deff"/>
<text x="2094.8" y="1236.55" font-size="15.4" fill="#121212" letter-spacing="0.74">schedule</text>
<rect x="2090.7" y="1242.95" width="98.4" height="21.35" fill="#a2deff"/>
<text x="2094.8" y="1259.05" font-size="15.4" fill="#121212" letter-spacing="0.74">__sche...</text>
<rect x="2090.7" y="1265.45" width="98.4" height="21.35" fill="#a2deff"/>
<text x="2094.8" y="1281.55" font-size="15.4" fill="#121212" letter-spacing="0.74">__trac...</text>
<rect x="2090.7" y="1287.95" width="98.4" height="21.35" fill="#a2deff"/>
<text x="2094.8" y="1304.05" font-size="15.4" fill="#121212" letter-spacing="0.74">__trac...</text>
<rect x="2190.2" y="972.95" width="10.4" height="21.35" fill="#fecc82"/>
<rect x="2190.2" y="995.45" width="10.4" height="21.35" fill="#fecc82"/>
<rect x="2190.2" y="1017.95" width="10.4" height="21.35" fill="#fecc82"/>
<rect x="2190.2" y="1040.45" width="10.4" height="21.35" fill="#a2deff"/>
<rect x="2190.2" y="1062.95" width="10.4" height="21.35" fill="#a2deff"/>
<rect x="2190.2" y="1085.45" width="10.4" height="21.35" fill="#a2deff"/>
<rect x="2190.2" y="1107.95" width="10.4" height="21.35" fill="#a2deff"/>
<rect x="2190.2" y="1130.45" width="10.4" height="21.35" fill="#a2deff"/>
<rect x="2190.2" y="1152.95" width="10.4" height="21.35" fill="#a2deff"/>
<rect x="2190.2" y="1175.45" width="10.4" height="21.35" fill="#a2deff"/>
<rect x="2190.2" y="1197.95" width="10.4" height="21.35" fill="#a2deff"/>
<rect x="2190.2" y="1220.45" width="10.4" height="21.35" fill="#a2deff"/>
<rect x="2203.8" y="972.95" width="160.2" height="21.35" fill="#a2deff"/>
<text x="2207.9" y="989.05" font-size="15.4" fill="#121212" letter-spacing="0.74">__do_timed_wait</text>
<rect x="2203.8" y="995.45" width="160.2" height="21.35" fill="#a2deff"/>
<text x="2207.9" y="1011.55" font-size="15.4" fill="#121212" letter-spacing="0.74">pthread_cond...</text>
<rect x="2203.8" y="1017.95" width="160.2" height="21.35" fill="#a2deff"/>
<text x="2207.9" y="1034.05" font-size="15.4" fill="#121212" letter-spacing="0.74">__futex_wait_ex</text>
<rect x="2203.8" y="1040.45" width="160.2" height="21.35" fill="#a2deff"/>
<text x="2207.9" y="1056.55" font-size="15.4" fill="#121212" letter-spacing="0.74">syscall</text>
<rect x="2203.8" y="1062.95" width="160.2" height="21.35" fill="#a2deff"/>
<text x="2207.9" y="1079.05" font-size="15.4" fill="#121212" letter-spacing="0.74">entry_SYSCAL...</text>
<rect x="2203.8" y="1085.45" width="160.2" height="21.35" fill="#a2deff"/>
<text x="2207.9" y="1101.55" font-size="15.4" fill="#121212" letter-spacing="0.74">do_syscall_64</text>
<rect x="2203.8" y="1107.95" width="160.2" height="21.35" fill="#a2deff"/>
<text x="2207.9" y="1124.05" font-size="15.4" fill="#121212" letter-spacing="0.74">__x64_sys_futex</text>
<rect x="2203.8" y="1130.45" width="160.2" height="21.35" fill="#a2deff"/>
<text x="2207.9" y="1146.55" font-size="15.4" fill="#121212" letter-spacing="0.74">__se_sys_futex</text>
<rect x="2203.8" y="1152.95" width="160.2" height="21.35" fill="#a2deff"/>
<text x="2207.9" y="1169.05" font-size="15.4" fill="#121212" letter-spacing="0.74">do_futex</text>
<rect x="2203.8" y="1175.45" width="160.2" height="21.35" fill="#a2deff"/>
<text x="2207.9" y="1191.55" font-size="15.4" fill="#121212" letter-spacing="0.74">futex_wait</text>
<rect x="2203.8" y="1197.95" width="160.2" height="21.35" fill="#a2deff"/>
<text x="2207.9" y="1214.05" font-size="15.4" fill="#121212" letter-spacing="0.74">futex_wait_q...</text>
<rect x="2203.8" y="1220.45" width="160.2" height="21.35" fill="#a2deff"/>
<text x="2207.9" y="1236.55" font-size="15.4" fill="#121212" letter-spacing="0.74">schedule</text>
<rect x="2203.8" y="1242.95" width="160.2" height="21.35" fill="#a2deff"/>
<text x="2207.9" y="1259.05" font-size="15.4" fill="#121212" letter-spacing="0.74">__schedule</text>
<rect x="2203.8" y="1265.45" width="160.2" height="21.35" fill="#a2deff"/>
<text x="2207.9" y="1281.55" font-size="15.4" fill="#121212" letter-spacing="0.74">__traceiter_...</text>
<rect x="2203.8" y="1287.95" width="160.2" height="21.35" fill="#a2deff"/>
<text x="2207.9" y="1304.05" font-size="15.4" fill="#121212" letter-spacing="0.74">__traceiter_...</text>
<rect x="2202" y="1310.45" width="0.8" height="45" fill="#55595c"/>
<rect x="2396" y="136" width="164" height="284" fill="#3c3f41" shape-rendering="crispEdges"/>
<rect x="2396" y="189" width="164" height="1" fill="#2a2c2d" shape-rendering="crispEdges"/>
<text x="2404.5" y="170" font-size="20" fill="#bbbbbb">Analysis</text>
<path d="M2522 165.5 H2541 M2526.5 161 L2522 165.5 L2526.5 170 M2536.5 161 L2541 165.5 L2536.5 170" fill="none" stroke="#afb1b3" stroke-width="1.7"/>
<text x="2479" y="219.5" font-size="20" fill="#bbbbbb" text-anchor="middle">Events</text>
<text x="2479" y="266" font-size="20" fill="#bbbbbb" text-anchor="middle">Bottom Up</text>
<text x="2479" y="312.5" font-size="20" fill="#bbbbbb" text-anchor="middle">Flame Chart</text>
<text x="2478" y="358.5" font-size="20" fill="#bbbbbb" text-anchor="middle">Top Down</text>
<text x="2478" y="404.7" font-size="20" fill="#bbbbbb" text-anchor="middle">Summary</text>
<rect x="2396" y="420" width="164" height="5" fill="#4a88c7" shape-rendering="crispEdges"/>
<rect x="2396" y="425" width="164" height="955" fill="#2b2b2b" shape-rendering="crispEdges"/>
<text x="2415.6" y="458" font-size="20.3" fill="#bbbbbb">...00:0...</text>
<text x="2415.6" y="494" font-size="20.3" fill="#bbbbbb">...340....</text>
<text x="2415.6" y="530" font-size="20.3" fill="#bbbbbb">...Thread</text>
<text x="2415.6" y="566" font-size="20.3" fill="#bbbbbb">ID 1053</text>
<path d="M2420.5 611.5 h14 l-7 8.5z" fill="#afb1b3"/>
<text x="2445.5" y="623" font-size="20" fill="#bbbbbb">Longest</text>
<rect x="2416" y="642" width="125" height="38" fill="#45484a" shape-rendering="crispEdges"/>
<rect x="2416" y="680" width="125" height="313" fill="#3c3f41" shape-rendering="crispEdges"/>
<rect x="2416" y="679.5" width="125" height="1" fill="#55585a" shape-rendering="crispEdges"/>
<rect x="2437.5" y="642" width="1" height="38" fill="#35383a" shape-rendering="crispEdges"/>
<rect x="2436.5" y="680" width="1" height="313" fill="#4f5254" shape-rendering="crispEdges"/>
<rect x="2459" y="642" width="1" height="38" fill="#35383a" shape-rendering="crispEdges"/>
<rect x="2458" y="680" width="1" height="313" fill="#4f5254" shape-rendering="crispEdges"/>
<rect x="2479.9" y="642" width="1" height="38" fill="#35383a" shape-rendering="crispEdges"/>
<rect x="2478.9" y="680" width="1" height="313" fill="#4f5254" shape-rendering="crispEdges"/>
<rect x="2500.2" y="642" width="1" height="38" fill="#35383a" shape-rendering="crispEdges"/>
<rect x="2499.2" y="680" width="1" height="313" fill="#4f5254" shape-rendering="crispEdges"/>
<rect x="2521.1" y="642" width="1" height="38" fill="#35383a" shape-rendering="crispEdges"/>
<rect x="2520.1" y="680" width="1" height="313" fill="#4f5254" shape-rendering="crispEdges"/>
<circle cx="2434.8" cy="667.2" r="1.35" fill="#c9c4bb"/>
<circle cx="2434.0" cy="702.4" r="1.35" fill="#c9c4bb"/>
<circle cx="2434.0" cy="733.6" r="1.35" fill="#c9c4bb"/>
<circle cx="2434.0" cy="764.8" r="1.35" fill="#c9c4bb"/>
<circle cx="2434.0" cy="796" r="1.35" fill="#c9c4bb"/>
<circle cx="2434.0" cy="827.2" r="1.35" fill="#c9c4bb"/>
<circle cx="2434.0" cy="858.4" r="1.35" fill="#c9c4bb"/>
<circle cx="2434.0" cy="889.6" r="1.35" fill="#c9c4bb"/>
<circle cx="2434.0" cy="920.8" r="1.35" fill="#c9c4bb"/>
<circle cx="2434.0" cy="952" r="1.35" fill="#c9c4bb"/>
<circle cx="2434.0" cy="983.2" r="1.35" fill="#c9c4bb"/>
<circle cx="2455.8" cy="667.2" r="1.35" fill="#c9c4bb"/>
<circle cx="2455.0" cy="702.4" r="1.35" fill="#c9c4bb"/>
<circle cx="2455.0" cy="733.6" r="1.35" fill="#c9c4bb"/>
<circle cx="2455.0" cy="764.8" r="1.35" fill="#c9c4bb"/>
<circle cx="2455.0" cy="796" r="1.35" fill="#c9c4bb"/>
<circle cx="2455.0" cy="827.2" r="1.35" fill="#c9c4bb"/>
<circle cx="2455.0" cy="858.4" r="1.35" fill="#c9c4bb"/>
<circle cx="2455.0" cy="889.6" r="1.35" fill="#c9c4bb"/>
<circle cx="2455.0" cy="920.8" r="1.35" fill="#c9c4bb"/>
<circle cx="2455.0" cy="952" r="1.35" fill="#c9c4bb"/>
<circle cx="2455.0" cy="983.2" r="1.35" fill="#c9c4bb"/>
<circle cx="2476.8" cy="667.2" r="1.35" fill="#c9c4bb"/>
<circle cx="2476.0" cy="702.4" r="1.35" fill="#c9c4bb"/>
<circle cx="2476.0" cy="733.6" r="1.35" fill="#c9c4bb"/>
<circle cx="2476.0" cy="764.8" r="1.35" fill="#c9c4bb"/>
<circle cx="2476.0" cy="796" r="1.35" fill="#c9c4bb"/>
<circle cx="2476.0" cy="827.2" r="1.35" fill="#c9c4bb"/>
<circle cx="2476.0" cy="858.4" r="1.35" fill="#c9c4bb"/>
<circle cx="2476.0" cy="889.6" r="1.35" fill="#c9c4bb"/>
<circle cx="2476.0" cy="920.8" r="1.35" fill="#c9c4bb"/>
<circle cx="2476.0" cy="952" r="1.35" fill="#c9c4bb"/>
<circle cx="2476.0" cy="983.2" r="1.35" fill="#c9c4bb"/>
<circle cx="2497.4" cy="667.2" r="1.35" fill="#c9c4bb"/>
<circle cx="2496.6" cy="702.4" r="1.35" fill="#c9c4bb"/>
<circle cx="2496.6" cy="733.6" r="1.35" fill="#c9c4bb"/>
<circle cx="2496.6" cy="764.8" r="1.35" fill="#c9c4bb"/>
<circle cx="2496.6" cy="796" r="1.35" fill="#c9c4bb"/>
<circle cx="2496.6" cy="827.2" r="1.35" fill="#c9c4bb"/>
<circle cx="2496.6" cy="858.4" r="1.35" fill="#c9c4bb"/>
<circle cx="2496.6" cy="889.6" r="1.35" fill="#c9c4bb"/>
<circle cx="2496.6" cy="920.8" r="1.35" fill="#c9c4bb"/>
<circle cx="2496.6" cy="952" r="1.35" fill="#c9c4bb"/>
<circle cx="2496.6" cy="983.2" r="1.35" fill="#c9c4bb"/>
<circle cx="2518.6" cy="667.2" r="1.35" fill="#c9c4bb"/>
<circle cx="2517.7999999999997" cy="702.4" r="1.35" fill="#c9c4bb"/>
<circle cx="2517.7999999999997" cy="733.6" r="1.35" fill="#c9c4bb"/>
<circle cx="2517.7999999999997" cy="764.8" r="1.35" fill="#c9c4bb"/>
<circle cx="2517.7999999999997" cy="796" r="1.35" fill="#c9c4bb"/>
<circle cx="2517.7999999999997" cy="827.2" r="1.35" fill="#c9c4bb"/>
<circle cx="2517.7999999999997" cy="858.4" r="1.35" fill="#c9c4bb"/>
<circle cx="2517.7999999999997" cy="889.6" r="1.35" fill="#c9c4bb"/>
<circle cx="2517.7999999999997" cy="920.8" r="1.35" fill="#c9c4bb"/>
<circle cx="2517.7999999999997" cy="952" r="1.35" fill="#c9c4bb"/>
<circle cx="2517.7999999999997" cy="983.2" r="1.35" fill="#c9c4bb"/>
<circle cx="2539.2" cy="667.2" r="1.35" fill="#c9c4bb"/>
<circle cx="2538.3999999999996" cy="702.4" r="1.35" fill="#c9c4bb"/>
<circle cx="2538.3999999999996" cy="733.6" r="1.35" fill="#c9c4bb"/>
<circle cx="2538.3999999999996" cy="764.8" r="1.35" fill="#c9c4bb"/>
<circle cx="2538.3999999999996" cy="796" r="1.35" fill="#c9c4bb"/>
<circle cx="2538.3999999999996" cy="827.2" r="1.35" fill="#c9c4bb"/>
<circle cx="2538.3999999999996" cy="858.4" r="1.35" fill="#c9c4bb"/>
<circle cx="2538.3999999999996" cy="889.6" r="1.35" fill="#c9c4bb"/>
<circle cx="2538.3999999999996" cy="920.8" r="1.35" fill="#c9c4bb"/>
<circle cx="2538.3999999999996" cy="952" r="1.35" fill="#c9c4bb"/>
<circle cx="2538.3999999999996" cy="983.2" r="1.35" fill="#c9c4bb"/>
</svg>
</body></html>
